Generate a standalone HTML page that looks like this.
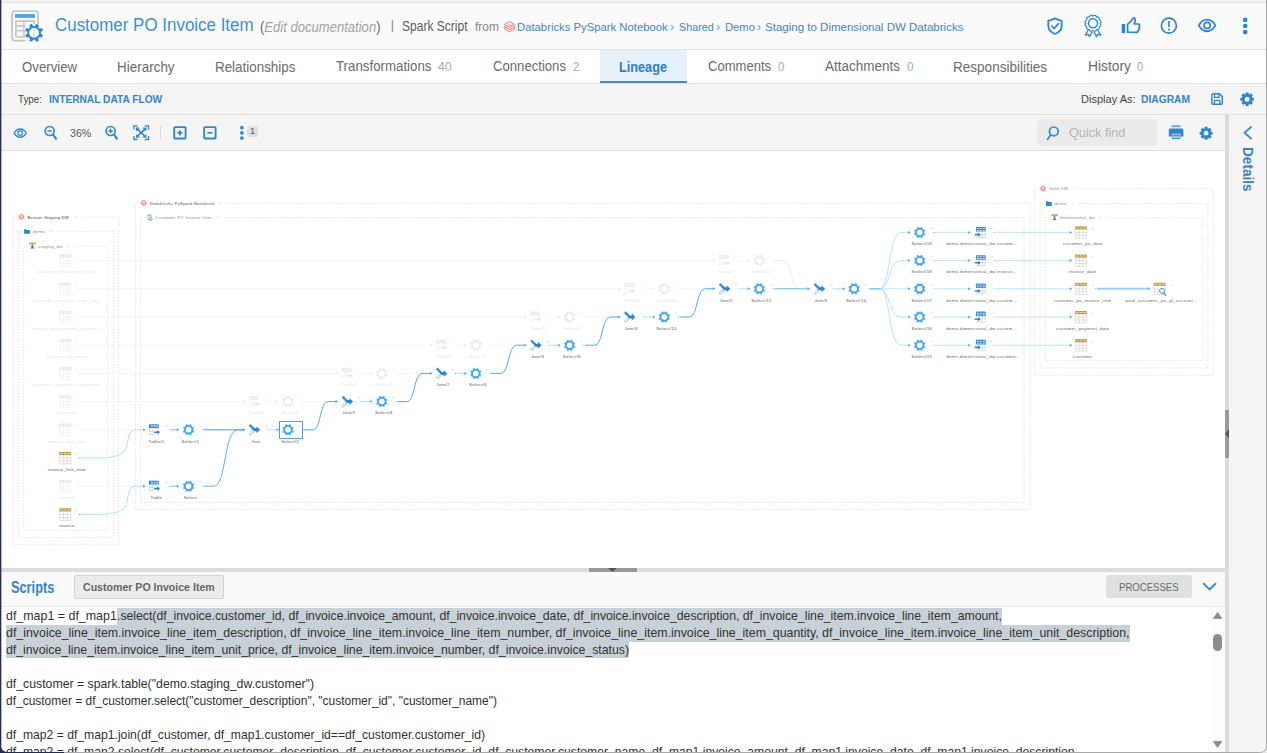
<!DOCTYPE html>
<html lang="en"><head><meta charset="utf-8"><title>Customer PO Invoice Item - Lineage</title>
<style>
html,body{margin:0;padding:0}
body{width:1267px;height:753px;position:relative;overflow:hidden;background:#fff;font-family:"Liberation Sans", sans-serif;}
.b{position:absolute}
.t{position:absolute;white-space:pre;line-height:20px;transform-origin:0 50%}
.t i{font-style:italic}
.sep{font-size:12px;padding:0 1px;color:#5a9bd3}
.sl{position:absolute;left:6px;white-space:pre;line-height:17px;height:17px;font-size:12.6px;color:#313131;transform-origin:0 50%}
.sel{background:#c9d1d8;display:inline-block;height:17px}
svg{position:absolute;left:0;top:0}
</style></head>
<body>

<div class="b" style="left:0;top:0;width:1267px;height:2px;background:#f3f3f3"></div>
<div class="b" style="left:0;top:2px;width:1267px;height:1px;background:#e2e2e2"></div>
<div class="b" style="left:0;top:3px;width:1267px;height:46px;background:#fafafa"></div>
<div class="b" style="left:0;top:49px;width:1267px;height:1px;background:#e3e3e3"></div>
<div class="b" style="left:0;top:50px;width:1267px;height:33px;background:#fff"></div>
<div class="b" style="left:600px;top:50px;width:87px;height:33px;background:#e4f1fb"></div>
<div class="b" style="left:600px;top:80.6px;width:87px;height:2.4px;background:#3d8fd3"></div>
<div class="b" style="left:0;top:83px;width:1267px;height:1px;background:#e0e0e0"></div>
<div class="b" style="left:0;top:84px;width:1267px;height:30px;background:#f5f5f5"></div>
<div class="b" style="left:0;top:114px;width:1267px;height:1px;background:#dedede"></div>
<div class="b" style="left:0;top:115px;width:1225px;height:35px;background:#f5f5f5"></div>
<div class="b" style="left:0;top:150px;width:1225px;height:1px;background:#dedede"></div>
<div class="b" style="left:1037px;top:119px;width:120px;height:27px;background:#ebebeb;border-radius:4px"></div>
<div class="b" style="left:247px;top:125.5px;width:10.6px;height:11px;background:#e0e0e0;border-radius:3px"></div>
<div class="b" style="left:160px;top:126px;width:1px;height:14px;background:#dcdcdc"></div>
<div class="b" style="left:1225px;top:115px;width:4px;height:638px;background:#dcdcdc"></div>
<div class="b" style="left:1225px;top:410px;width:4px;height:47.5px;background:#9a9a9a"></div>
<div class="b" style="left:1229px;top:115px;width:38px;height:638px;background:#f5f5f5"></div>
<div class="b" style="left:0;top:568px;width:1225px;height:4px;background:#dcdcdc"></div>
<div class="b" style="left:589px;top:568px;width:48px;height:4px;background:#9a9a9a"></div>
<div class="b" style="left:0;top:572px;width:1225px;height:34px;background:#fafafa"></div>
<div class="b" style="left:74px;top:575px;width:150px;height:24px;background:#ececec;border:1px solid #d2d2d2;box-sizing:border-box;border-radius:2px"></div>
<div class="b" style="left:1106px;top:575.3px;width:85.6px;height:23px;background:#e0e0e0;border-radius:3px"></div>
<div class="b" style="left:0;top:606px;width:1225px;height:1px;background:#e9e9e9"></div>
<div class="b" style="left:1210px;top:607px;width:15px;height:146px;background:#fcfcfc"></div>
<div class="b" style="left:1213px;top:634px;width:9px;height:17px;background:#8c8c8c;border-radius:4.5px"></div>

<span class="t" style="left:55.2px;top:14.95px;font-size:19.2px;color:#3f8fd0;transform:scaleX(0.8827);">Customer PO Invoice Item</span>
<span class="t" style="left:260.0px;top:16.53px;font-size:15.2px;color:#666;transform:scaleX(0.8598);">(<i style="color:#a2a2a2">Edit documentation</i>)</span>
<span class="t" style="left:390.5px;top:15.10px;font-size:13px;color:#777;transform:scaleX(0.7963);">|</span>
<span class="t" style="left:402.3px;top:16.38px;font-size:13.9px;color:#5e5e5e;transform:scaleX(0.8658);">Spark Script</span>
<span class="t" style="left:475.0px;top:16.50px;font-size:12.4px;color:#888;transform:scaleX(0.9598);">from</span>
<span class="t" style="left:516.5px;top:17.25px;font-size:11.4px;color:#4585c2;transform:scaleX(0.9918);">Databricks PySpark Notebook</span>
<span class="t" style="left:669.5px;top:16.67px;font-size:12.5px;color:#5f9bd2;transform:scaleX(0.9588);">›</span>
<span class="t" style="left:678.7px;top:17.25px;font-size:11.4px;color:#4585c2;transform:scaleX(0.9446);">Shared</span>
<span class="t" style="left:716.4px;top:16.67px;font-size:12.5px;color:#5f9bd2;transform:scaleX(0.9588);">›</span>
<span class="t" style="left:724.6px;top:17.25px;font-size:11.4px;color:#4585c2;transform:scaleX(0.9871);">Demo</span>
<span class="t" style="left:757.4px;top:16.67px;font-size:12.5px;color:#5f9bd2;transform:scaleX(0.9588);">›</span>
<span class="t" style="left:765.4px;top:17.25px;font-size:11.4px;color:#4585c2;transform:scaleX(1.0110);">Staging to Dimensional DW Databricks</span>
<span class="t" style="left:21.5px;top:57.14px;font-size:14.6px;color:#6b6b6b;transform:scaleX(0.9058);">Overview</span>
<span class="t" style="left:116.7px;top:57.14px;font-size:14.6px;color:#6b6b6b;transform:scaleX(0.9223);">Hierarchy</span>
<span class="t" style="left:214.6px;top:57.14px;font-size:14.6px;color:#6b6b6b;transform:scaleX(0.9175);">Relationships</span>
<span class="t" style="left:336.4px;top:55.94px;font-size:14.6px;color:#6b6b6b;transform:scaleX(0.9103);">Transformations</span>
<span class="t" style="left:438.2px;top:57.09px;font-size:13.6px;color:#aaa;transform:scaleX(0.8992);">40</span>
<span class="t" style="left:493.2px;top:55.94px;font-size:14.6px;color:#6b6b6b;transform:scaleX(0.8997);">Connections</span>
<span class="t" style="left:572.5px;top:57.09px;font-size:13.6px;color:#aaa;transform:scaleX(0.8331);">2</span>
<span class="t" style="left:619.0px;top:57.14px;font-size:14.6px;color:#2f7fc1;font-weight:700;transform:scaleX(0.8703);">Lineage</span>
<span class="t" style="left:708.2px;top:55.94px;font-size:14.6px;color:#6b6b6b;transform:scaleX(0.8942);">Comments</span>
<span class="t" style="left:777.6px;top:57.09px;font-size:13.6px;color:#aaa;transform:scaleX(0.8463);">0</span>
<span class="t" style="left:825.1px;top:55.94px;font-size:14.6px;color:#6b6b6b;transform:scaleX(0.9245);">Attachments</span>
<span class="t" style="left:906.7px;top:57.09px;font-size:13.6px;color:#aaa;transform:scaleX(0.8595);">0</span>
<span class="t" style="left:953.4px;top:57.14px;font-size:14.6px;color:#6b6b6b;transform:scaleX(0.9280);">Responsibilities</span>
<span class="t" style="left:1087.6px;top:55.94px;font-size:14.6px;color:#6b6b6b;transform:scaleX(0.9470);">History</span>
<span class="t" style="left:1137.0px;top:57.09px;font-size:13.6px;color:#aaa;transform:scaleX(0.8198);">0</span>
<span class="t" style="left:17.7px;top:88.51px;font-size:11.8px;color:#444;transform:scaleX(0.8282);">Type:</span>
<span class="t" style="left:48.5px;top:88.58px;font-size:11.6px;color:#3585c6;font-weight:700;transform:scaleX(0.8774);">INTERNAL DATA FLOW</span>
<span class="t" style="left:1081.3px;top:88.51px;font-size:11.8px;color:#444;transform:scaleX(0.9356);">Display As:</span>
<span class="t" style="left:1141.0px;top:88.58px;font-size:11.6px;color:#3585c6;font-weight:700;transform:scaleX(0.8846);">DIAGRAM</span>
<span class="t" style="left:70.0px;top:123.01px;font-size:11.8px;color:#555;transform:scaleX(0.8974);">36%</span>
<span class="t" style="left:249.6px;top:120.87px;font-size:9.6px;color:#555;transform:scaleX(0.9357);">1</span>
<span class="t" style="left:1068.6px;top:122.56px;font-size:13.4px;color:#b4b4b4;transform:scaleX(0.9472);">Quick find</span>
<span class="t" style="left:11.2px;top:578.23px;font-size:15.8px;color:#3585c6;font-weight:700;transform:scaleX(0.8084);">Scripts</span>
<span class="t" style="left:83.3px;top:577.11px;font-size:11.8px;color:#666;font-weight:700;transform:scaleX(0.8968);">Customer PO Invoice Item</span>
<span class="t" style="left:1119.4px;top:576.81px;font-size:11.8px;color:#6a6a6a;transform:scaleX(0.8116);">PROCESSES</span>
<span class="t" style="left:1247.7px;top:147.4px;font-size:15.4px;font-weight:700;color:#3585c6;line-height:16px;transform-origin:0 0;transform:rotate(90deg) translate(0,-50%) scaleX(0.885);">Details</span>
<div id="scripts">
<div class="b" style="left:116.8px;top:607.6px;width:884.9px;height:17px;background:#c9d1d8"></div>
<div class="b" style="left:6px;top:624.6px;width:1123.5px;height:17px;background:#c9d1d8"></div>
<div class="b" style="left:6px;top:641.6px;width:623.0px;height:16.8px;background:#c9d1d8"></div>
<div class="sl" style="top:608px;transform:scaleX(0.9860)">df_map1 = df_map1</div>
<div class="sl" style="top:608px;left:116.8px;transform:scaleX(0.9716)">.select(df_invoice.customer_id, df_invoice.invoice_amount, df_invoice.invoice_date, df_invoice.invoice_description, df_invoice_line_item.invoice_line_item_amount,</div>
<div class="sl" style="top:625px;transform:scaleX(0.9824)">df_invoice_line_item.invoice_line_item_description, df_invoice_line_item.invoice_line_item_number, df_invoice_line_item.invoice_line_item_quantity, df_invoice_line_item.invoice_line_item_unit_description,</div>
<div class="sl" style="top:642px;transform:scaleX(0.9737)">df_invoice_line_item.invoice_line_item_unit_price, df_invoice_line_item.invoice_number, df_invoice.invoice_status)</div>
<div class="sl" style="top:676px;transform:scaleX(0.9750)">df_customer = spark.table("demo.staging_dw.customer")</div>
<div class="sl" style="top:693px;transform:scaleX(0.9507)">df_customer = df_customer.select("customer_description", "customer_id", "customer_name")</div>
<div class="sl" style="top:727px;transform:scaleX(0.9658)">df_map2 = df_map1.join(df_customer, df_map1.customer_id==df_customer.customer_id)</div>
<div class="sl" style="top:744px;transform:scaleX(0.9658)">df_map2 = df_map2.select(df_customer.customer_description, df_customer.customer_id, df_customer.customer_name, df_map1.invoice_amount, df_map1.invoice_date, df_map1.invoice_description,</div>
</div>
<svg width="1267" height="753" viewBox="0 0 1267 753" font-family="Liberation Sans, sans-serif">
<g>
<rect x="12.1" y="11.1" width="26" height="29.6" rx="2.6" fill="#fafafa" stroke="#c6c6c6" stroke-width="1.8"/>
<rect x="15" y="14" width="20" height="3.9" fill="#4ea8e6"/>
<path d="M15.9 21.1 H34.2 V37 H15.9 Z M15.9 25.9 H34.2 M15.9 30.8 H34.2 M23.9 21.1 V37" fill="none" stroke="#c6c6c6" stroke-width="1.6"/>
<rect x="25.3" y="23.9" width="17.8" height="17.9" fill="#fafafa"/>
<path d="M33 28 H35 V38 H33 Z" fill="#e6e6e6"/>
<path d="M40.93 33.77 L43.05 34.95 L41.94 37.61 L39.62 36.94 L38.24 38.32 L38.91 40.64 L36.25 41.75 L35.07 39.63 L33.13 39.63 L31.95 41.75 L29.29 40.64 L29.96 38.32 L28.58 36.94 L26.26 37.61 L25.15 34.95 L27.27 33.77 L27.27 31.83 L25.15 30.65 L26.26 27.99 L28.58 28.66 L29.96 27.28 L29.29 24.96 L31.95 23.85 L33.13 25.97 L35.07 25.97 L36.25 23.85 L38.91 24.96 L38.24 27.28 L39.62 28.66 L41.94 27.99 L43.05 30.65 L40.93 31.83 Z M29.20 32.80 a4.90 4.90 0 1 0 9.80 0 a4.90 4.90 0 1 0 -9.80 0 Z" fill="#3488cf" fill-rule="evenodd"/>
</g>
<g fill="none" stroke="#f46a5d" stroke-width="0.95" stroke-linejoin="round" stroke-linecap="round">
<path d="M504.8 24.3 L509.6 21.5 L514.4 24.3 L509.6 27.1 Z" stroke-width="0.9"/>
<path d="M504.8 26.6 L509.6 29.4 L514.4 26.6"/>
<path d="M504.8 28.9 L509.6 31.7 L514.4 28.9"/>
<path d="M504.8 26.6 V28.9 M514.4 26.6 V28.9" stroke-width="0.8"/>
<path d="M507.4 25.9 L509.6 24.7 L511.8 25.9" stroke-width="0.7"/>
</g>
<g fill="none" stroke="#2f86cc" stroke-width="1.8" stroke-linejoin="round" stroke-linecap="round">
<path d="M1055 18.4 C1052.6 19.8 1050.4 20.4 1048.3 20.6 V25.6 C1048.3 29.6 1051 32.6 1055 34 C1059 32.6 1061.7 29.6 1061.7 25.6 V20.6 C1059.6 20.4 1057.4 19.8 1055 18.4 Z"/>
<path d="M1051.8 26 L1054.2 28.4 L1058.6 23.6" stroke-width="1.7"/>
</g>
<g fill="none" stroke="#2f86cc" stroke-linejoin="round">
<path d="M1100.20 23.30 A2.05 2.05 0 0 1 1099.24 26.90 A2.05 2.05 0 0 1 1096.60 29.54 A2.05 2.05 0 0 1 1093.00 30.50 A2.05 2.05 0 0 1 1089.40 29.54 A2.05 2.05 0 0 1 1086.76 26.90 A2.05 2.05 0 0 1 1085.80 23.30 A2.05 2.05 0 0 1 1086.76 19.70 A2.05 2.05 0 0 1 1089.40 17.06 A2.05 2.05 0 0 1 1093.00 16.10 A2.05 2.05 0 0 1 1096.60 17.06 A2.05 2.05 0 0 1 1099.24 19.70 A2.05 2.05 0 0 1 1100.20 23.30 Z" stroke-width="1.15"/>
<circle cx="1093" cy="23.3" r="4.5" stroke-width="1.5"/>
<path d="M1088.2 30.4 L1085.2 35 L1088.3 34.3 L1089.5 36.6 L1092.2 31.8" stroke-width="1.3"/>
<path d="M1097.8 30.4 L1100.8 35 L1097.7 34.3 L1096.5 36.6 L1093.8 31.8" stroke-width="1.3"/>
</g>
<g>
<rect x="1121.7" y="24" width="3.4" height="9.2" fill="#2f86cc"/>
<path d="M1127.6 32.2 V24.4 L1131.6 20.6 C1132.4 19.6 1132.6 18.2 1133.6 17.9 C1135.2 17.9 1135.6 19.8 1135 21.4 L1134.2 24 H1138.2 C1139.6 24 1140 25.4 1139.2 26.4 C1139.8 27.2 1139.5 28.4 1138.7 28.8 C1139.1 29.8 1138.6 30.7 1137.8 31 C1137.9 31.8 1137.3 32.4 1136.2 32.4 Z" fill="none" stroke="#2f86cc" stroke-width="1.7" stroke-linejoin="round"/>
</g>
<g>
<circle cx="1168.9" cy="25.7" r="7.5" fill="none" stroke="#2f86cc" stroke-width="1.7"/>
<rect x="1168.1" y="21" width="1.7" height="6" fill="#2f86cc"/>
<circle cx="1168.95" cy="29.6" r="1.05" fill="#2f86cc"/>
</g>
<g fill="none" stroke="#2f86cc" stroke-width="1.8">
<path d="M1198.8 25.4 C1203 17.6 1211.2 17.6 1215.4 25.4 C1211.2 33.2 1203 33.2 1198.8 25.4 Z" stroke-linejoin="round"/>
<circle cx="1207.1" cy="25.4" r="3.1" stroke-width="1.7"/>
</g>
<g fill="#2f86cc"><circle cx="1245.2" cy="19.9" r="2.35"/><circle cx="1245.2" cy="26" r="2.35"/><circle cx="1245.2" cy="32.1" r="2.35"/></g>
<g fill="none" stroke="#2f86cc" stroke-width="1.5" stroke-linejoin="round">
<path d="M1213.2 93.7 H1219.4 L1222.3 96.6 V103 Q1222.3 104.3 1221 104.3 H1213.2 Q1211.9 104.3 1211.9 103 V95 Q1211.9 93.7 1213.2 93.7 Z"/>
<path d="M1214.6 94 V97.4 H1219 V94" stroke-width="1.3"/>
<path d="M1214.4 104 V100.4 H1219.8 V104" stroke-width="1.3"/>
</g>
<path d="M1252.05 97.59 L1253.83 97.69 L1253.83 100.71 L1252.05 100.81 L1251.73 101.56 L1252.93 102.90 L1250.80 105.03 L1249.46 103.83 L1248.71 104.15 L1248.61 105.93 L1245.59 105.93 L1245.49 104.15 L1244.74 103.83 L1243.40 105.03 L1241.27 102.90 L1242.47 101.56 L1242.15 100.81 L1240.37 100.71 L1240.37 97.69 L1242.15 97.59 L1242.47 96.84 L1241.27 95.50 L1243.40 93.37 L1244.74 94.57 L1245.49 94.25 L1245.59 92.47 L1248.61 92.47 L1248.71 94.25 L1249.46 94.57 L1250.80 93.37 L1252.93 95.50 L1251.73 96.84 Z M1244.60 99.20 a2.50 2.50 0 1 0 5.00 0 a2.50 2.50 0 1 0 -5.00 0 Z" fill="#2f86cc" fill-rule="evenodd"/>
<path d="M1210.86 131.65 L1212.54 131.76 L1212.54 134.64 L1210.86 134.75 L1210.56 135.47 L1211.67 136.74 L1209.64 138.77 L1208.37 137.66 L1207.65 137.96 L1207.54 139.64 L1204.66 139.64 L1204.55 137.96 L1203.83 137.66 L1202.56 138.77 L1200.53 136.74 L1201.64 135.47 L1201.34 134.75 L1199.66 134.64 L1199.66 131.76 L1201.34 131.65 L1201.64 130.93 L1200.53 129.66 L1202.56 127.63 L1203.83 128.74 L1204.55 128.44 L1204.66 126.76 L1207.54 126.76 L1207.65 128.44 L1208.37 128.74 L1209.64 127.63 L1211.67 129.66 L1210.56 130.93 Z M1203.70 133.20 a2.40 2.40 0 1 0 4.80 0 a2.40 2.40 0 1 0 -4.80 0 Z" fill="#2f86cc" fill-rule="evenodd"/>
<g>
<rect x="1171.6" y="125.1" width="9" height="2.3" fill="#7fb4e0"/>
<path d="M1170.4 128.6 H1181.8 Q1183.4 128.6 1183.4 130.2 V136.4 H1180.6 V133.4 H1171.6 V136.4 H1168.8 V130.2 Q1168.8 128.6 1170.4 128.6 Z" fill="#2f86cc"/>
<path d="M1172.3 134 H1179.9 V138.6 H1172.3 Z M1173.4 135.4 H1178.8 M1173.4 137 H1178.8" fill="#fff" stroke="#2f86cc" stroke-width="1"/>
</g>
<g fill="none" stroke="#2f86cc" stroke-width="1.7" stroke-linecap="round">
<circle cx="1053.8" cy="131.4" r="4.4"/>
<path d="M1050.6 135 L1047.6 139.2"/>
</g>
<g fill="none" stroke="#2f86cc" stroke-width="1.4">
<path d="M14.2 133.1 C17.4 127.6 23 127.6 26.2 133.1 C23 138.6 17.4 138.6 14.2 133.1 Z" stroke-linejoin="round"/>
<circle cx="20.2" cy="133.1" r="2.2" stroke-width="1.2"/>
</g>
<g fill="none" stroke="#2f86cc" stroke-width="1.7" stroke-linecap="round"><circle cx="49.7" cy="131" r="4.5"/><path d="M53.1 134.6 L56.1 138.8" stroke-width="2"/><path d="M47.5 131 H51.900000000000006" stroke-width="1.5" stroke-linecap="butt"/></g>
<g fill="none" stroke="#2f86cc" stroke-width="1.7" stroke-linecap="round"><circle cx="110.6" cy="131" r="4.5"/><path d="M114.0 134.6 L117.0 138.8" stroke-width="2"/><path d="M108.39999999999999 131 H112.8" stroke-width="1.5" stroke-linecap="butt"/><path d="M110.6 128.8 V133.2" stroke-width="1.5" stroke-linecap="butt"/></g>
<g fill="none" stroke="#2f86cc" stroke-width="1.3">
<path d="M133.9 129.4 V125.9 H137.6 M144.8 125.9 H148.5 V129.4 M148.5 136 V139.5 H144.8 M137.6 139.5 H133.9 V136"/>
<path d="M137 128.6 L145.4 136.8 M145.4 128.6 L137 136.8" stroke-width="1.6"/>
<path d="M136.6 131 V128.2 H139.4 M143 128.2 H145.8 V131 M145.8 134.4 V137.2 H143 M139.4 137.2 H136.6 V134.4" stroke-width="1.2"/>
</g>
<g fill="none" stroke="#2f86cc"><rect x="174.20000000000002" y="127.1" width="11.4" height="11.4" rx="0.8" stroke-width="1.9"/><path d="M177.3 132.8 H182.5" stroke-width="1.7"/><path d="M179.9 130.2 V135.4" stroke-width="1.7"/></g>
<g fill="none" stroke="#2f86cc"><rect x="204.20000000000002" y="127.1" width="11.4" height="11.4" rx="0.8" stroke-width="1.9"/><path d="M207.3 132.8 H212.5" stroke-width="1.7"/></g>
<g fill="#2f86cc"><circle cx="241.9" cy="127.7" r="1.85"/><circle cx="241.9" cy="132.9" r="1.85"/><circle cx="241.9" cy="138" r="1.85"/></g>
<path d="M1251.6 126.6 L1244.6 132.8 L1251.6 139" fill="none" stroke="#4691d3" stroke-width="2"/>
<path d="M1203.2 583.2 L1209.6 589.4 L1216 583.2" fill="none" stroke="#2f86cc" stroke-width="1.8"/>
<path d="M1213.4 618.4 L1217.6 612.4 L1221.8 618.4 Z" fill="#8c8c8c" stroke="#8c8c8c" stroke-width="0.8" stroke-linejoin="round"/>
<path d="M1213.4 741.4 L1217.6 747.4 L1221.8 741.4 Z" fill="#8c8c8c" stroke="#8c8c8c" stroke-width="0.8" stroke-linejoin="round"/>
<path d="M608 568 L617 568 L612.5 571.9 Z" fill="#555"/>
<path d="M1229 429.2 L1229 438.2 L1225.1 433.7 Z" fill="#555"/>
<g id="diagram">
<path d="M17.6 217.2 H12.7 V544.7 H118.6 V217.2 H81.0" fill="none" stroke="#d6d6d6" stroke-width="0.65" stroke-dasharray="1.4 1.5"/>
<path d="M21.40 214.20 L23.60 215.50 V218.20 L21.40 219.60 L19.20 218.20 V215.50 Z" fill="#fbd3cd" stroke="#f0695d" stroke-width="0.7" stroke-linejoin="round"/><path d="M19.40 216.70 L21.40 217.90 L23.40 216.70" fill="none" stroke="#ef6b60" stroke-width="0.6"/>
<text x="27.5" y="218.9" font-size="4.3" fill="#858585" text-anchor="start" letter-spacing="0.09" font-weight="700">Bronze Staging DW</text>
<path d="M74.3 217.9 L75.5 216.7 L76.7 217.9" fill="none" stroke="#aaa" stroke-width="0.45"/>
<path d="M22.4 231.4 H18.5 V537.4 H113.3 V231.4 H56.2" fill="none" stroke="#d6d6d6" stroke-width="0.65" stroke-dasharray="1.4 1.5"/>
<path d="M24.10 229.20 h2.2 l0.7 0.8 h2.9 v3.8 h-5.8z" fill="#2f86cc"/>
<text x="33.1" y="233.0" font-size="4.3" fill="#888" text-anchor="start" letter-spacing="0.28">demo</text>
<path d="M49.5 232.1 L50.7 230.9 L51.9 232.1" fill="none" stroke="#bbb" stroke-width="0.45"/>
<path d="M27.4 246.2 H23.6 V530.2 H107.6 V246.2 H75.0" fill="none" stroke="#d6d6d6" stroke-width="0.65" stroke-dasharray="1.4 1.5"/>
<rect x="29.20" y="242.60" width="6.4" height="1.9" fill="#c3a94a"/><rect x="29.50" y="244.50" width="5.8" height="4.4" fill="#fff" stroke="#d9d9d9" stroke-width="0.4"/><path d="M31.50 244.60 h1.8 v2.2 l1 1.6 h-3.8 l1 -1.6z" fill="#2f86cc"/>
<text x="38.1" y="247.6" font-size="4.3" fill="#888" text-anchor="start" letter-spacing="0.28">staging_dw</text>
<path d="M67.4 246.8 L68.6 245.6 L69.8 246.8" fill="none" stroke="#bbb" stroke-width="0.45"/>
<path d="M140.4 203.2 H135.4 V509.4 H1030.1 V203.2 H225.0" fill="none" stroke="#d6d6d6" stroke-width="0.65" stroke-dasharray="1.4 1.5"/>
<path d="M143.80 200.30 L146.00 201.60 V204.30 L143.80 205.70 L141.60 204.30 V201.60 Z" fill="#fbd3cd" stroke="#f0695d" stroke-width="0.7" stroke-linejoin="round"/><path d="M141.80 202.80 L143.80 204.00 L145.80 202.80" fill="none" stroke="#ef6b60" stroke-width="0.6"/>
<text x="150.0" y="204.8" font-size="4.2" fill="#8c8c8c" text-anchor="start" letter-spacing="0.18" font-weight="700">Databricks PySpark Notebook</text>
<path d="M219.2 203.9 L220.4 202.7 L221.6 203.9" fill="none" stroke="#aaa" stroke-width="0.45"/>
<path d="M145.6 217.5 H140.6 V502.4 H1024.0 V217.5 H225.0" fill="none" stroke="#d6d6d6" stroke-width="0.65" stroke-dasharray="1.4 1.5"/>
<rect x="147.2" y="214.6" width="4" height="5.2" rx="0.5" fill="#fff" stroke="#9c9c9c" stroke-width="0.5"/><rect x="147.8" y="215.3" width="2.8" height="0.9" fill="#4ea8e6"/><circle cx="150.6" cy="218.8" r="1.5" fill="#fff" stroke="#3488cf" stroke-width="0.8"/>
<text x="155.0" y="219.1" font-size="4.2" fill="#8c8c8c" text-anchor="start" letter-spacing="0.32">Customer PO Invoice Item</text>
<path d="M217.2 218.2 L218.4 217.0 L219.6 218.2" fill="none" stroke="#bbb" stroke-width="0.45"/>
<path d="M1039.0 188.8 H1034.4 V375.3 H1213.3 V188.8 H1080.0" fill="none" stroke="#d6d6d6" stroke-width="0.65" stroke-dasharray="1.4 1.5"/>
<path d="M1043.00 185.90 L1045.20 187.20 V189.90 L1043.00 191.30 L1040.80 189.90 V187.20 Z" fill="#fbd3cd" stroke="#f0695d" stroke-width="0.7" stroke-linejoin="round"/><path d="M1041.00 188.40 L1043.00 189.60 L1045.00 188.40" fill="none" stroke="#ef6b60" stroke-width="0.6"/>
<text x="1049.0" y="190.3" font-size="4.3" fill="#888" text-anchor="start" letter-spacing="0.28">Gold DW</text>
<path d="M1073.1 189.5 L1074.3 188.3 L1075.5 189.5" fill="none" stroke="#bbb" stroke-width="0.45"/>
<path d="M1044.0 203.6 H1040.0 V367.9 H1207.8 V203.6 H1077.8" fill="none" stroke="#d6d6d6" stroke-width="0.65" stroke-dasharray="1.4 1.5"/>
<path d="M1046.00 201.30 h2.2 l0.7 0.8 h2.9 v3.8 h-5.8z" fill="#2f86cc"/>
<text x="1054.6" y="205.1" font-size="4.3" fill="#888" text-anchor="start" letter-spacing="0.28">demo</text>
<path d="M1071.5 204.3 L1072.7 203.1 L1073.9 204.3" fill="none" stroke="#bbb" stroke-width="0.45"/>
<path d="M1049.4 217.9 H1045.5 V360.8 H1202.7 V217.9 H1106.5" fill="none" stroke="#d6d6d6" stroke-width="0.65" stroke-dasharray="1.4 1.5"/>
<rect x="1051.30" y="214.20" width="6.4" height="1.9" fill="#c3a94a"/><rect x="1051.60" y="216.10" width="5.8" height="4.4" fill="#fff" stroke="#d9d9d9" stroke-width="0.4"/><path d="M1053.60 216.20 h1.8 v2.2 l1 1.6 h-3.8 l1 -1.6z" fill="#2f86cc"/>
<text x="1060.0" y="219.3" font-size="4.3" fill="#888" text-anchor="start" letter-spacing="0.28">dimensional_dw</text>
<path d="M1099.4 218.5 L1100.6 217.3 L1101.8 218.5" fill="none" stroke="#bbb" stroke-width="0.45"/>
<g id="edges"><circle cx="79.2" cy="260.60" r="0.5" fill="#e6e6e6"/>
<path d="M80.00 260.60 H713.80" stroke="#f0f0f0" stroke-width="0.7" fill="none"/><path d="M715.80 260.60 l-2.60 -1.50 v3.00z" fill="#e9e9e9"/>
<circle cx="79.2" cy="288.80" r="0.5" fill="#e6e6e6"/>
<path d="M80.00 288.80 H619.00" stroke="#f0f0f0" stroke-width="0.7" fill="none"/><path d="M621.00 288.80 l-2.60 -1.50 v3.00z" fill="#e9e9e9"/>
<circle cx="79.2" cy="317.00" r="0.5" fill="#e6e6e6"/>
<path d="M80.00 317.00 H525.20" stroke="#f0f0f0" stroke-width="0.7" fill="none"/><path d="M527.20 317.00 l-2.60 -1.50 v3.00z" fill="#e9e9e9"/>
<circle cx="79.2" cy="345.20" r="0.5" fill="#e6e6e6"/>
<path d="M80.00 345.20 H430.90" stroke="#f0f0f0" stroke-width="0.7" fill="none"/><path d="M432.90 345.20 l-2.60 -1.50 v3.00z" fill="#e9e9e9"/>
<circle cx="79.2" cy="373.40" r="0.5" fill="#e6e6e6"/>
<path d="M80.00 373.40 H336.60" stroke="#f0f0f0" stroke-width="0.7" fill="none"/><path d="M338.60 373.40 l-2.60 -1.50 v3.00z" fill="#e9e9e9"/>
<circle cx="79.2" cy="401.60" r="0.5" fill="#e6e6e6"/>
<path d="M80.00 401.60 H243.70" stroke="#f0f0f0" stroke-width="0.7" fill="none"/><path d="M245.70 401.60 l-2.60 -1.50 v3.00z" fill="#e9e9e9"/>
<circle cx="79.2" cy="429.80" r="0.5" fill="#e6e6e6"/>
<path d="M80.00 429.80 H132.00" stroke="#f0f0f0" stroke-width="0.7" fill="none"/>
<circle cx="79.2" cy="486.20" r="0.5" fill="#e6e6e6"/>
<path d="M80.00 486.20 H132.00" stroke="#f0f0f0" stroke-width="0.7" fill="none"/>
<path d="M268.60 401.60 H277.00" stroke="#f0f0f0" stroke-width="0.7" fill="none"/><path d="M279.00 401.60 l-2.60 -1.50 v3.00z" fill="#e9e9e9"/>
<path d="M302.00 401.60 H338.20" stroke="#f0f0f0" stroke-width="0.7" fill="none"/>
<path d="M361.50 373.40 H370.80" stroke="#f0f0f0" stroke-width="0.7" fill="none"/><path d="M372.80 373.40 l-2.60 -1.50 v3.00z" fill="#e9e9e9"/>
<path d="M395.80 373.40 H432.50" stroke="#f0f0f0" stroke-width="0.7" fill="none"/>
<path d="M455.80 345.20 H464.80" stroke="#f0f0f0" stroke-width="0.7" fill="none"/><path d="M466.80 345.20 l-2.60 -1.50 v3.00z" fill="#e9e9e9"/>
<path d="M489.80 345.20 H526.80" stroke="#f0f0f0" stroke-width="0.7" fill="none"/>
<path d="M550.10 317.00 H558.60" stroke="#f0f0f0" stroke-width="0.7" fill="none"/><path d="M560.60 317.00 l-2.60 -1.50 v3.00z" fill="#e9e9e9"/>
<path d="M583.60 317.00 H620.60" stroke="#f0f0f0" stroke-width="0.7" fill="none"/>
<path d="M643.90 288.80 H653.30" stroke="#f0f0f0" stroke-width="0.7" fill="none"/><path d="M655.30 288.80 l-2.60 -1.50 v3.00z" fill="#e9e9e9"/>
<path d="M678.30 288.80 H715.40" stroke="#f0f0f0" stroke-width="0.7" fill="none"/>
<path d="M738.70 260.60 H748.30" stroke="#f0f0f0" stroke-width="0.7" fill="none"/><path d="M750.30 260.60 l-2.60 -1.50 v3.00z" fill="#e9e9e9"/>
<path d="M773.4 260.60 H782.5 C792 260.60 790.5 288.80 799 288.80" stroke="#e4e4e4" stroke-width="0.7" fill="none"/>
<circle cx="169.40" cy="429.80" r="0.55" fill="#56aaea"/><path d="M170.70 429.80 H177.40" stroke="#7fc0f2" stroke-width="1.0" fill="none"/><path d="M179.40 429.80 l-2.60 -1.50 v3.00z" fill="#56aaea"/>
<circle cx="169.40" cy="486.20" r="0.55" fill="#56aaea"/><path d="M170.70 486.20 H177.40" stroke="#7fc0f2" stroke-width="1.0" fill="none"/><path d="M179.40 486.20 l-2.60 -1.50 v3.00z" fill="#56aaea"/>
<circle cx="79.6" cy="458.00" r="0.6" fill="#56aaea"/><path d="M80.6 458.00 H98 C116 458.00 125.6 454.40 127.2 445.00 C128.6 434.80 130 429.80 136 429.80 H143.8" stroke="#a3d3f7" stroke-width="0.8" fill="none"/><path d="M145.80 429.80 l-2.60 -1.50 v3.00z" fill="#56aaea"/>
<circle cx="79.6" cy="514.40" r="0.6" fill="#56aaea"/><path d="M80.6 514.40 H98 C116 514.40 125.6 510.80 127.2 501.40 C128.6 491.20 130 486.20 136 486.20 H143.8" stroke="#a3d3f7" stroke-width="0.8" fill="none"/><path d="M145.80 486.20 l-2.60 -1.50 v3.00z" fill="#56aaea"/>
<circle cx="202.80" cy="429.80" r="0.55" fill="#56aaea"/><path d="M204.10 429.80 H243.40" stroke="#7cbef1" stroke-width="1.5" fill="none"/><path d="M245.40 429.80 l-2.60 -1.50 v3.00z" fill="#56aaea"/>
<circle cx="202.80" cy="486.20" r="0.55" fill="#56aaea"/><path d="M204.10 486.20 H213.40 C226.93 486.20 223.24 429.80 238.00 429.80 H243.40" stroke="#4fa8ea" stroke-width="0.9" fill="none"/><path d="M245.40 429.80 l-2.60 -1.50 v3.00z" fill="#56aaea"/>
<circle cx="268.10" cy="429.80" r="0.55" fill="#56aaea"/><path d="M269.40 429.80 H277.20" stroke="#b5dbf8" stroke-width="1.0" fill="none"/><path d="M279.20 429.80 l-2.60 -1.50 v3.00z" fill="#56aaea"/>
<circle cx="302.20" cy="429.80" r="0.55" fill="#56aaea"/><path d="M303.50 429.80 H312.80 C321.49 429.80 319.12 401.60 328.60 401.60 H336.20" stroke="#4fa8ea" stroke-width="1.0" fill="none"/><path d="M338.20 401.60 l-2.60 -1.50 v3.00z" fill="#56aaea"/>
<circle cx="361.00" cy="401.60" r="0.55" fill="#56aaea"/><path d="M362.30 401.60 H371.00" stroke="#b5dbf8" stroke-width="1.0" fill="none"/><path d="M373.00 401.60 l-2.60 -1.50 v3.00z" fill="#56aaea"/>
<circle cx="396.00" cy="401.60" r="0.55" fill="#56aaea"/><path d="M397.30 401.60 H406.60 C415.56 401.60 413.12 373.40 422.90 373.40 H430.50" stroke="#4fa8ea" stroke-width="1.0" fill="none"/><path d="M432.50 373.40 l-2.60 -1.50 v3.00z" fill="#56aaea"/>
<circle cx="455.30" cy="373.40" r="0.55" fill="#56aaea"/><path d="M456.60 373.40 H465.00" stroke="#b5dbf8" stroke-width="1.0" fill="none"/><path d="M467.00 373.40 l-2.60 -1.50 v3.00z" fill="#56aaea"/>
<circle cx="490.00" cy="373.40" r="0.55" fill="#56aaea"/><path d="M491.30 373.40 H500.60 C509.73 373.40 507.24 345.20 517.20 345.20 H524.80" stroke="#4fa8ea" stroke-width="1.0" fill="none"/><path d="M526.80 345.20 l-2.60 -1.50 v3.00z" fill="#56aaea"/>
<circle cx="549.60" cy="345.20" r="0.55" fill="#56aaea"/><path d="M550.90 345.20 H558.80" stroke="#b5dbf8" stroke-width="1.0" fill="none"/><path d="M560.80 345.20 l-2.60 -1.50 v3.00z" fill="#56aaea"/>
<circle cx="583.80" cy="345.20" r="0.55" fill="#56aaea"/><path d="M585.10 345.20 H594.40 C603.53 345.20 601.04 317.00 611.00 317.00 H618.60" stroke="#4fa8ea" stroke-width="1.0" fill="none"/><path d="M620.60 317.00 l-2.60 -1.50 v3.00z" fill="#56aaea"/>
<circle cx="643.40" cy="317.00" r="0.55" fill="#56aaea"/><path d="M644.70 317.00 H653.50" stroke="#b5dbf8" stroke-width="1.0" fill="none"/><path d="M655.50 317.00 l-2.60 -1.50 v3.00z" fill="#56aaea"/>
<circle cx="678.50" cy="317.00" r="0.55" fill="#56aaea"/><path d="M679.80 317.00 H689.10 C698.28 317.00 695.78 288.80 705.80 288.80 H713.40" stroke="#4fa8ea" stroke-width="1.0" fill="none"/><path d="M715.40 288.80 l-2.60 -1.50 v3.00z" fill="#56aaea"/>
<circle cx="738.20" cy="288.80" r="0.55" fill="#56aaea"/><path d="M739.50 288.80 H748.50" stroke="#b5dbf8" stroke-width="1.0" fill="none"/><path d="M750.50 288.80 l-2.60 -1.50 v3.00z" fill="#56aaea"/>
<circle cx="833.10" cy="288.80" r="0.55" fill="#56aaea"/><path d="M834.40 288.80 H843.30" stroke="#b5dbf8" stroke-width="1.0" fill="none"/><path d="M845.30 288.80 l-2.60 -1.50 v3.00z" fill="#56aaea"/>
<circle cx="773.50" cy="288.80" r="0.55" fill="#56aaea"/><path d="M774.80 288.80 H808.10" stroke="#9ccdf3" stroke-width="1.6" fill="none"/><path d="M810.10 288.80 l-2.60 -1.50 v3.00z" fill="#56aaea"/>
<path d="M879.5 288.80 C891 288.80 887.5 232.40 901.5 232.40 H908.7" stroke="#a9d6f7" stroke-width="0.75" fill="none"/><path d="M910.70 232.40 l-2.60 -1.50 v3.00z" fill="#56aaea"/>
<circle cx="934.20" cy="232.40" r="0.55" fill="#56aaea"/><path d="M935.50 232.40 H968.80" stroke="#a9d6f7" stroke-width="0.7" fill="none"/><path d="M970.80 232.40 l-2.60 -1.50 v3.00z" fill="#56aaea"/>
<circle cx="994.20" cy="232.40" r="0.55" fill="#56aaea"/><path d="M995.50 232.40 H1070.30" stroke="#a9d6f7" stroke-width="0.7" fill="none"/><path d="M1072.30 232.40 l-2.60 -1.50 v3.00z" fill="#56aaea"/>
<path d="M879.5 288.80 C891 288.80 887.5 260.60 901.5 260.60 H908.7" stroke="#a9d6f7" stroke-width="0.75" fill="none"/><path d="M910.70 260.60 l-2.60 -1.50 v3.00z" fill="#56aaea"/>
<circle cx="934.20" cy="260.60" r="0.55" fill="#56aaea"/><path d="M935.50 260.60 H968.80" stroke="#a9d6f7" stroke-width="0.7" fill="none"/><path d="M970.80 260.60 l-2.60 -1.50 v3.00z" fill="#56aaea"/>
<circle cx="994.20" cy="260.60" r="0.55" fill="#56aaea"/><path d="M995.50 260.60 H1070.30" stroke="#a9d6f7" stroke-width="0.7" fill="none"/><path d="M1072.30 260.60 l-2.60 -1.50 v3.00z" fill="#56aaea"/>
<circle cx="868.50" cy="288.80" r="0.55" fill="#56aaea"/><path d="M869.70 288.80 H880.5" stroke="#8cc6f2" stroke-width="1.6" fill="none"/>
<path d="M880 288.80 H908.7" stroke="#a9d6f7" stroke-width="0.75" fill="none"/><path d="M910.70 288.80 l-2.60 -1.50 v3.00z" fill="#56aaea"/>
<circle cx="934.20" cy="288.80" r="0.55" fill="#56aaea"/><path d="M935.50 288.80 H968.80" stroke="#a9d6f7" stroke-width="0.7" fill="none"/><path d="M970.80 288.80 l-2.60 -1.50 v3.00z" fill="#56aaea"/>
<circle cx="994.20" cy="288.80" r="0.55" fill="#56aaea"/><path d="M995.50 288.80 H1070.30" stroke="#a9d6f7" stroke-width="0.7" fill="none"/><path d="M1072.30 288.80 l-2.60 -1.50 v3.00z" fill="#56aaea"/>
<path d="M879.5 288.80 C891 288.80 887.5 317.00 901.5 317.00 H908.7" stroke="#a9d6f7" stroke-width="0.75" fill="none"/><path d="M910.70 317.00 l-2.60 -1.50 v3.00z" fill="#56aaea"/>
<circle cx="934.20" cy="317.00" r="0.55" fill="#56aaea"/><path d="M935.50 317.00 H968.80" stroke="#a9d6f7" stroke-width="0.7" fill="none"/><path d="M970.80 317.00 l-2.60 -1.50 v3.00z" fill="#56aaea"/>
<circle cx="994.20" cy="317.00" r="0.55" fill="#56aaea"/><path d="M995.50 317.00 H1070.30" stroke="#a9d6f7" stroke-width="0.7" fill="none"/><path d="M1072.30 317.00 l-2.60 -1.50 v3.00z" fill="#56aaea"/>
<path d="M879.5 288.80 C891 288.80 887.5 345.20 901.5 345.20 H908.7" stroke="#a9d6f7" stroke-width="0.75" fill="none"/><path d="M910.70 345.20 l-2.60 -1.50 v3.00z" fill="#56aaea"/>
<circle cx="934.20" cy="345.20" r="0.55" fill="#56aaea"/><path d="M935.50 345.20 H968.80" stroke="#a9d6f7" stroke-width="0.7" fill="none"/><path d="M970.80 345.20 l-2.60 -1.50 v3.00z" fill="#56aaea"/>
<circle cx="994.20" cy="345.20" r="0.55" fill="#56aaea"/><path d="M995.50 345.20 H1070.30" stroke="#a9d6f7" stroke-width="0.7" fill="none"/><path d="M1072.30 345.20 l-2.60 -1.50 v3.00z" fill="#56aaea"/>
<circle cx="1095.40" cy="288.80" r="0.55" fill="#56aaea"/><path d="M1096.70 288.80 H1148.40" stroke="#a3d1f6" stroke-width="1.9" fill="none"/><path d="M1150.40 288.80 l-2.60 -1.50 v3.00z" fill="#56aaea"/></g>
<g id="nodes"><rect x="59.30" y="254.50" width="11.8" height="3.2" fill="#f1f1f1"/><path d="M59.60 254.80 H70.80 V257.70 M59.60 254.80 V257.70 M63.40 254.80 V257.70 M67.10 254.80 V257.70" fill="none" stroke="#e2e2e2" stroke-width="0.5"/><path d="M59.60 257.70 V266.50 H70.80 V257.70 M63.40 257.70 V266.50 M67.10 257.70 V266.50 M59.60 260.70 H70.80 M59.60 263.60 H70.80" fill="none" stroke="#ededed" stroke-width="0.6"/>
<path d="M75.5 256.2 L76.7 257.4 L77.9 256.2" fill="none" stroke="#d8d8d8" stroke-width="0.45"/>
<text x="66.9" y="273.3" font-size="4.3" fill="#e3e3e3" text-anchor="middle" letter-spacing="0.28">customer_purchase_order</text>
<rect x="59.30" y="282.70" width="11.8" height="3.2" fill="#f1f1f1"/><path d="M59.60 283.00 H70.80 V285.90 M59.60 283.00 V285.90 M63.40 283.00 V285.90 M67.10 283.00 V285.90" fill="none" stroke="#e2e2e2" stroke-width="0.5"/><path d="M59.60 285.90 V294.70 H70.80 V285.90 M63.40 285.90 V294.70 M67.10 285.90 V294.70 M59.60 288.90 H70.80 M59.60 291.80 H70.80" fill="none" stroke="#ededed" stroke-width="0.6"/>
<path d="M75.5 284.4 L76.7 285.6 L77.9 284.4" fill="none" stroke="#d8d8d8" stroke-width="0.45"/>
<text x="66.9" y="301.5" font-size="4.3" fill="#e3e3e3" text-anchor="middle" letter-spacing="0.28">customer_purchase_order_lin…</text>
<rect x="59.30" y="310.90" width="11.8" height="3.2" fill="#f1f1f1"/><path d="M59.60 311.20 H70.80 V314.10 M59.60 311.20 V314.10 M63.40 311.20 V314.10 M67.10 311.20 V314.10" fill="none" stroke="#e2e2e2" stroke-width="0.5"/><path d="M59.60 314.10 V322.90 H70.80 V314.10 M63.40 314.10 V322.90 M67.10 314.10 V322.90 M59.60 317.10 H70.80 M59.60 320.00 H70.80" fill="none" stroke="#ededed" stroke-width="0.6"/>
<path d="M75.5 312.6 L76.7 313.8 L77.9 312.6" fill="none" stroke="#d8d8d8" stroke-width="0.45"/>
<text x="66.9" y="329.7" font-size="4.3" fill="#e3e3e3" text-anchor="middle" letter-spacing="0.28">invoice_associatedto_purchas…</text>
<rect x="59.30" y="339.10" width="11.8" height="3.2" fill="#f1f1f1"/><path d="M59.60 339.40 H70.80 V342.30 M59.60 339.40 V342.30 M63.40 339.40 V342.30 M67.10 339.40 V342.30" fill="none" stroke="#e2e2e2" stroke-width="0.5"/><path d="M59.60 342.30 V351.10 H70.80 V342.30 M63.40 342.30 V351.10 M67.10 342.30 V351.10 M59.60 345.30 H70.80 M59.60 348.20 H70.80" fill="none" stroke="#ededed" stroke-width="0.6"/>
<path d="M75.5 340.8 L76.7 342.0 L77.9 340.8" fill="none" stroke="#d8d8d8" stroke-width="0.45"/>
<text x="66.9" y="357.9" font-size="4.3" fill="#e3e3e3" text-anchor="middle" letter-spacing="0.28">customer_payment</text>
<rect x="59.30" y="367.30" width="11.8" height="3.2" fill="#f1f1f1"/><path d="M59.60 367.60 H70.80 V370.50 M59.60 367.60 V370.50 M63.40 367.60 V370.50 M67.10 367.60 V370.50" fill="none" stroke="#e2e2e2" stroke-width="0.5"/><path d="M59.60 370.50 V379.30 H70.80 V370.50 M63.40 370.50 V379.30 M67.10 370.50 V379.30 M59.60 373.50 H70.80 M59.60 376.40 H70.80" fill="none" stroke="#ededed" stroke-width="0.6"/>
<path d="M75.5 369.0 L76.7 370.2 L77.9 369.0" fill="none" stroke="#d8d8d8" stroke-width="0.45"/>
<text x="66.9" y="386.1" font-size="4.3" fill="#e3e3e3" text-anchor="middle" letter-spacing="0.28">customer_payment_assignment</text>
<rect x="59.30" y="395.50" width="11.8" height="3.2" fill="#f1f1f1"/><path d="M59.60 395.80 H70.80 V398.70 M59.60 395.80 V398.70 M63.40 395.80 V398.70 M67.10 395.80 V398.70" fill="none" stroke="#e2e2e2" stroke-width="0.5"/><path d="M59.60 398.70 V407.50 H70.80 V398.70 M63.40 398.70 V407.50 M67.10 398.70 V407.50 M59.60 401.70 H70.80 M59.60 404.60 H70.80" fill="none" stroke="#ededed" stroke-width="0.6"/>
<path d="M75.5 397.2 L76.7 398.4 L77.9 397.2" fill="none" stroke="#d8d8d8" stroke-width="0.45"/>
<text x="66.9" y="414.3" font-size="4.3" fill="#e3e3e3" text-anchor="middle" letter-spacing="0.28">customer</text>
<rect x="59.30" y="423.70" width="11.8" height="3.2" fill="#f1f1f1"/><path d="M59.60 424.00 H70.80 V426.90 M59.60 424.00 V426.90 M63.40 424.00 V426.90 M67.10 424.00 V426.90" fill="none" stroke="#e2e2e2" stroke-width="0.5"/><path d="M59.60 426.90 V435.70 H70.80 V426.90 M63.40 426.90 V435.70 M67.10 426.90 V435.70 M59.60 429.90 H70.80 M59.60 432.80 H70.80" fill="none" stroke="#ededed" stroke-width="0.6"/>
<path d="M75.5 425.4 L76.7 426.6 L77.9 425.4" fill="none" stroke="#d8d8d8" stroke-width="0.45"/>
<text x="66.9" y="442.5" font-size="4.3" fill="#e3e3e3" text-anchor="middle" letter-spacing="0.28">invoice_line_item</text>
<rect x="59.30" y="451.90" width="11.8" height="3.2" fill="#b9a24a"/><path d="M60.30 453.00 h2.6 v0.9 h-2.6z M63.90 453.00 h2.6 v0.9 h-2.6z M67.50 453.00 h2.6 v0.9 h-2.6z" fill="#e8dfb4"/><path d="M59.60 455.10 V463.90 H70.80 V455.10 M63.40 455.10 V463.90 M67.10 455.10 V463.90 M59.60 458.10 H70.80 M59.60 461.00 H70.80" fill="none" stroke="#cdcdcd" stroke-width="0.6"/>
<path d="M75.5 453.6 L76.7 454.8 L77.9 453.6" fill="none" stroke="#b0b0b0" stroke-width="0.45"/>
<text x="66.9" y="470.7" font-size="4.3" fill="#555" text-anchor="middle" letter-spacing="0.28">invoice_line_item</text>
<rect x="59.30" y="480.10" width="11.8" height="3.2" fill="#f1f1f1"/><path d="M59.60 480.40 H70.80 V483.30 M59.60 480.40 V483.30 M63.40 480.40 V483.30 M67.10 480.40 V483.30" fill="none" stroke="#e2e2e2" stroke-width="0.5"/><path d="M59.60 483.30 V492.10 H70.80 V483.30 M63.40 483.30 V492.10 M67.10 483.30 V492.10 M59.60 486.30 H70.80 M59.60 489.20 H70.80" fill="none" stroke="#ededed" stroke-width="0.6"/>
<path d="M75.5 481.8 L76.7 483.0 L77.9 481.8" fill="none" stroke="#d8d8d8" stroke-width="0.45"/>
<text x="66.9" y="498.9" font-size="4.3" fill="#e3e3e3" text-anchor="middle" letter-spacing="0.28">invoice</text>
<rect x="59.30" y="508.30" width="11.8" height="3.2" fill="#b9a24a"/><path d="M60.30 509.40 h2.6 v0.9 h-2.6z M63.90 509.40 h2.6 v0.9 h-2.6z M67.50 509.40 h2.6 v0.9 h-2.6z" fill="#e8dfb4"/><path d="M59.60 511.50 V520.30 H70.80 V511.50 M63.40 511.50 V520.30 M67.10 511.50 V520.30 M59.60 514.50 H70.80 M59.60 517.40 H70.80" fill="none" stroke="#cdcdcd" stroke-width="0.6"/>
<path d="M75.5 510.0 L76.7 511.2 L77.9 510.0" fill="none" stroke="#b0b0b0" stroke-width="0.45"/>
<text x="66.9" y="527.1" font-size="4.3" fill="#555" text-anchor="middle" letter-spacing="0.28">invoice</text>
<rect x="248.90" y="396.10" width="9.7" height="3.8" fill="#ececec"/><path d="M251.10 397.10 h1.6 v1.7 h-1.6z M253.80 397.10 h1.6 v1.7 h-1.6z M256.30 397.10 h1.4 v1.7 h-1.4z" fill="#fff" opacity="0.5"/><path d="M249.20 399.90 V406.10 H258.30 V399.90 M252.10 399.90 V406.10 M255.10 399.90 V406.10 M249.20 403.00 H258.30" fill="none" stroke="#efefef" stroke-width="0.6"/><rect x="253.50" y="401.70" width="6.4" height="4.4" fill="#fff"/><path d="M253.90 403.20 h3.2 v-1.3 l2.9 2.1 l-2.9 2.1 v-1.3 h-3.2z" fill="#e6e6e6"/>
<path d="M265.0 397.2 L266.2 398.4 L267.4 397.2" fill="none" stroke="#e6e6e6" stroke-width="0.45"/>
<text x="256.3" y="414.3" font-size="4.3" fill="#e4e4e4" text-anchor="middle" letter-spacing="0.28">Table/2</text>
<path d="M292.46 402.16 L293.76 402.89 L292.98 404.76 L291.56 404.36 L290.76 405.16 L291.16 406.58 L289.29 407.36 L288.56 406.06 L287.44 406.06 L286.71 407.36 L284.84 406.58 L285.24 405.16 L284.44 404.36 L283.02 404.76 L282.24 402.89 L283.54 402.16 L283.54 401.04 L282.24 400.31 L283.02 398.44 L284.44 398.84 L285.24 398.04 L284.84 396.62 L286.71 395.84 L287.44 397.14 L288.56 397.14 L289.29 395.84 L291.16 396.62 L290.76 398.04 L291.56 398.84 L292.98 398.44 L293.76 400.31 L292.46 401.04 Z M285.00 401.60 a3.00 3.00 0 1 0 6.00 0 a3.00 3.00 0 1 0 -6.00 0 Z" fill="#ebebeb" fill-rule="evenodd"/>
<path d="M298.8 397.2 L300.0 398.4 L301.2 397.2" fill="none" stroke="#e6e6e6" stroke-width="0.45"/>
<text x="290.1" y="414.3" font-size="4.3" fill="#e4e4e4" text-anchor="middle" letter-spacing="0.28">Select/3</text>
<rect x="341.80" y="367.90" width="9.7" height="3.8" fill="#ececec"/><path d="M344.00 368.90 h1.6 v1.7 h-1.6z M346.70 368.90 h1.6 v1.7 h-1.6z M349.20 368.90 h1.4 v1.7 h-1.4z" fill="#fff" opacity="0.5"/><path d="M342.10 371.70 V377.90 H351.20 V371.70 M345.00 371.70 V377.90 M348.00 371.70 V377.90 M342.10 374.80 H351.20" fill="none" stroke="#efefef" stroke-width="0.6"/><rect x="346.40" y="373.50" width="6.4" height="4.4" fill="#fff"/><path d="M346.80 375.00 h3.2 v-1.3 l2.9 2.1 l-2.9 2.1 v-1.3 h-3.2z" fill="#e6e6e6"/>
<path d="M357.9 369.0 L359.1 370.2 L360.3 369.0" fill="none" stroke="#e6e6e6" stroke-width="0.45"/>
<text x="349.2" y="386.1" font-size="4.3" fill="#e4e4e4" text-anchor="middle" letter-spacing="0.28">Table/3</text>
<path d="M386.26 373.96 L387.56 374.69 L386.78 376.56 L385.36 376.16 L384.56 376.96 L384.96 378.38 L383.09 379.16 L382.36 377.86 L381.24 377.86 L380.51 379.16 L378.64 378.38 L379.04 376.96 L378.24 376.16 L376.82 376.56 L376.04 374.69 L377.34 373.96 L377.34 372.84 L376.04 372.11 L376.82 370.24 L378.24 370.64 L379.04 369.84 L378.64 368.42 L380.51 367.64 L381.24 368.94 L382.36 368.94 L383.09 367.64 L384.96 368.42 L384.56 369.84 L385.36 370.64 L386.78 370.24 L387.56 372.11 L386.26 372.84 Z M378.80 373.40 a3.00 3.00 0 1 0 6.00 0 a3.00 3.00 0 1 0 -6.00 0 Z" fill="#ebebeb" fill-rule="evenodd"/>
<path d="M392.6 369.0 L393.8 370.2 L395.0 369.0" fill="none" stroke="#e6e6e6" stroke-width="0.45"/>
<text x="383.9" y="386.1" font-size="4.3" fill="#e4e4e4" text-anchor="middle" letter-spacing="0.28">Select/5</text>
<rect x="436.10" y="339.70" width="9.7" height="3.8" fill="#ececec"/><path d="M438.30 340.70 h1.6 v1.7 h-1.6z M441.00 340.70 h1.6 v1.7 h-1.6z M443.50 340.70 h1.4 v1.7 h-1.4z" fill="#fff" opacity="0.5"/><path d="M436.40 343.50 V349.70 H445.50 V343.50 M439.30 343.50 V349.70 M442.30 343.50 V349.70 M436.40 346.60 H445.50" fill="none" stroke="#efefef" stroke-width="0.6"/><rect x="440.70" y="345.30" width="6.4" height="4.4" fill="#fff"/><path d="M441.10 346.80 h3.2 v-1.3 l2.9 2.1 l-2.9 2.1 v-1.3 h-3.2z" fill="#e6e6e6"/>
<path d="M452.2 340.8 L453.4 342.0 L454.6 340.8" fill="none" stroke="#e6e6e6" stroke-width="0.45"/>
<text x="443.5" y="357.9" font-size="4.3" fill="#e4e4e4" text-anchor="middle" letter-spacing="0.28">Table/4</text>
<path d="M480.26 345.76 L481.56 346.49 L480.78 348.36 L479.36 347.96 L478.56 348.76 L478.96 350.18 L477.09 350.96 L476.36 349.66 L475.24 349.66 L474.51 350.96 L472.64 350.18 L473.04 348.76 L472.24 347.96 L470.82 348.36 L470.04 346.49 L471.34 345.76 L471.34 344.64 L470.04 343.91 L470.82 342.04 L472.24 342.44 L473.04 341.64 L472.64 340.22 L474.51 339.44 L475.24 340.74 L476.36 340.74 L477.09 339.44 L478.96 340.22 L478.56 341.64 L479.36 342.44 L480.78 342.04 L481.56 343.91 L480.26 344.64 Z M472.80 345.20 a3.00 3.00 0 1 0 6.00 0 a3.00 3.00 0 1 0 -6.00 0 Z" fill="#ebebeb" fill-rule="evenodd"/>
<path d="M486.6 340.8 L487.8 342.0 L489.0 340.8" fill="none" stroke="#e6e6e6" stroke-width="0.45"/>
<text x="477.9" y="357.9" font-size="4.3" fill="#e4e4e4" text-anchor="middle" letter-spacing="0.28">Select/7</text>
<rect x="530.40" y="311.50" width="9.7" height="3.8" fill="#ececec"/><path d="M532.60 312.50 h1.6 v1.7 h-1.6z M535.30 312.50 h1.6 v1.7 h-1.6z M537.80 312.50 h1.4 v1.7 h-1.4z" fill="#fff" opacity="0.5"/><path d="M530.70 315.30 V321.50 H539.80 V315.30 M533.60 315.30 V321.50 M536.60 315.30 V321.50 M530.70 318.40 H539.80" fill="none" stroke="#efefef" stroke-width="0.6"/><rect x="535.00" y="317.10" width="6.4" height="4.4" fill="#fff"/><path d="M535.40 318.60 h3.2 v-1.3 l2.9 2.1 l-2.9 2.1 v-1.3 h-3.2z" fill="#e6e6e6"/>
<path d="M546.5 312.6 L547.7 313.8 L548.9 312.6" fill="none" stroke="#e6e6e6" stroke-width="0.45"/>
<text x="537.8" y="329.7" font-size="4.3" fill="#e4e4e4" text-anchor="middle" letter-spacing="0.28">Table/5</text>
<path d="M574.06 317.56 L575.36 318.29 L574.58 320.16 L573.16 319.76 L572.36 320.56 L572.76 321.98 L570.89 322.76 L570.16 321.46 L569.04 321.46 L568.31 322.76 L566.44 321.98 L566.84 320.56 L566.04 319.76 L564.62 320.16 L563.84 318.29 L565.14 317.56 L565.14 316.44 L563.84 315.71 L564.62 313.84 L566.04 314.24 L566.84 313.44 L566.44 312.02 L568.31 311.24 L569.04 312.54 L570.16 312.54 L570.89 311.24 L572.76 312.02 L572.36 313.44 L573.16 314.24 L574.58 313.84 L575.36 315.71 L574.06 316.44 Z M566.60 317.00 a3.00 3.00 0 1 0 6.00 0 a3.00 3.00 0 1 0 -6.00 0 Z" fill="#ebebeb" fill-rule="evenodd"/>
<path d="M580.4 312.6 L581.6 313.8 L582.8 312.6" fill="none" stroke="#e6e6e6" stroke-width="0.45"/>
<text x="571.7" y="329.7" font-size="4.3" fill="#e4e4e4" text-anchor="middle" letter-spacing="0.28">Select/9</text>
<rect x="624.20" y="283.30" width="9.7" height="3.8" fill="#ececec"/><path d="M626.40 284.30 h1.6 v1.7 h-1.6z M629.10 284.30 h1.6 v1.7 h-1.6z M631.60 284.30 h1.4 v1.7 h-1.4z" fill="#fff" opacity="0.5"/><path d="M624.50 287.10 V293.30 H633.60 V287.10 M627.40 287.10 V293.30 M630.40 287.10 V293.30 M624.50 290.20 H633.60" fill="none" stroke="#efefef" stroke-width="0.6"/><rect x="628.80" y="288.90" width="6.4" height="4.4" fill="#fff"/><path d="M629.20 290.40 h3.2 v-1.3 l2.9 2.1 l-2.9 2.1 v-1.3 h-3.2z" fill="#e6e6e6"/>
<path d="M640.3 284.4 L641.5 285.6 L642.7 284.4" fill="none" stroke="#e6e6e6" stroke-width="0.45"/>
<text x="631.6" y="301.5" font-size="4.3" fill="#e4e4e4" text-anchor="middle" letter-spacing="0.28">Table/6</text>
<path d="M668.76 289.36 L670.06 290.09 L669.28 291.96 L667.86 291.56 L667.06 292.36 L667.46 293.78 L665.59 294.56 L664.86 293.26 L663.74 293.26 L663.01 294.56 L661.14 293.78 L661.54 292.36 L660.74 291.56 L659.32 291.96 L658.54 290.09 L659.84 289.36 L659.84 288.24 L658.54 287.51 L659.32 285.64 L660.74 286.04 L661.54 285.24 L661.14 283.82 L663.01 283.04 L663.74 284.34 L664.86 284.34 L665.59 283.04 L667.46 283.82 L667.06 285.24 L667.86 286.04 L669.28 285.64 L670.06 287.51 L668.76 288.24 Z M661.30 288.80 a3.00 3.00 0 1 0 6.00 0 a3.00 3.00 0 1 0 -6.00 0 Z" fill="#ebebeb" fill-rule="evenodd"/>
<path d="M675.1 284.4 L676.3 285.6 L677.5 284.4" fill="none" stroke="#e6e6e6" stroke-width="0.45"/>
<text x="666.4" y="301.5" font-size="4.3" fill="#e4e4e4" text-anchor="middle" letter-spacing="0.28">Select/11</text>
<rect x="719.00" y="255.10" width="9.7" height="3.8" fill="#ececec"/><path d="M721.20 256.10 h1.6 v1.7 h-1.6z M723.90 256.10 h1.6 v1.7 h-1.6z M726.40 256.10 h1.4 v1.7 h-1.4z" fill="#fff" opacity="0.5"/><path d="M719.30 258.90 V265.10 H728.40 V258.90 M722.20 258.90 V265.10 M725.20 258.90 V265.10 M719.30 262.00 H728.40" fill="none" stroke="#efefef" stroke-width="0.6"/><rect x="723.60" y="260.70" width="6.4" height="4.4" fill="#fff"/><path d="M724.00 262.20 h3.2 v-1.3 l2.9 2.1 l-2.9 2.1 v-1.3 h-3.2z" fill="#e6e6e6"/>
<path d="M735.1 256.2 L736.3 257.4 L737.5 256.2" fill="none" stroke="#e6e6e6" stroke-width="0.45"/>
<text x="726.4" y="273.3" font-size="4.3" fill="#e4e4e4" text-anchor="middle" letter-spacing="0.28">Table/7</text>
<path d="M763.76 261.16 L765.06 261.89 L764.28 263.76 L762.86 263.36 L762.06 264.16 L762.46 265.58 L760.59 266.36 L759.86 265.06 L758.74 265.06 L758.01 266.36 L756.14 265.58 L756.54 264.16 L755.74 263.36 L754.32 263.76 L753.54 261.89 L754.84 261.16 L754.84 260.04 L753.54 259.31 L754.32 257.44 L755.74 257.84 L756.54 257.04 L756.14 255.62 L758.01 254.84 L758.74 256.14 L759.86 256.14 L760.59 254.84 L762.46 255.62 L762.06 257.04 L762.86 257.84 L764.28 257.44 L765.06 259.31 L763.76 260.04 Z M756.30 260.60 a3.00 3.00 0 1 0 6.00 0 a3.00 3.00 0 1 0 -6.00 0 Z" fill="#ebebeb" fill-rule="evenodd"/>
<path d="M770.1 256.2 L771.3 257.4 L772.5 256.2" fill="none" stroke="#e6e6e6" stroke-width="0.45"/>
<text x="761.4" y="273.3" font-size="4.3" fill="#e4e4e4" text-anchor="middle" letter-spacing="0.28">Select/13</text>
<rect x="149.00" y="424.30" width="9.7" height="3.8" fill="#3488cf"/><path d="M151.20 425.30 h1.6 v1.7 h-1.6z M153.90 425.30 h1.6 v1.7 h-1.6z M156.40 425.30 h1.4 v1.7 h-1.4z" fill="#fff" opacity="0.75"/><path d="M149.30 428.10 V434.30 H158.40 V428.10 M152.20 428.10 V434.30 M155.20 428.10 V434.30 M149.30 431.20 H158.40" fill="none" stroke="#bfbfbf" stroke-width="0.6"/><rect x="153.60" y="429.90" width="6.4" height="4.4" fill="#fff"/><path d="M154.00 431.40 h3.2 v-1.3 l2.9 2.1 l-2.9 2.1 v-1.3 h-3.2z" fill="#2f86cc"/>
<path d="M165.1 425.3 L166.3 426.5 L167.5 425.3" fill="none" stroke="#b0b0b0" stroke-width="0.45"/>
<text x="156.4" y="442.5" font-size="4.3" fill="#555" text-anchor="middle" letter-spacing="0.28">Table/1</text>
<path d="M193.06 430.36 L194.36 431.09 L193.58 432.96 L192.16 432.56 L191.36 433.36 L191.76 434.78 L189.89 435.56 L189.16 434.26 L188.04 434.26 L187.31 435.56 L185.44 434.78 L185.84 433.36 L185.04 432.56 L183.62 432.96 L182.84 431.09 L184.14 430.36 L184.14 429.24 L182.84 428.51 L183.62 426.64 L185.04 427.04 L185.84 426.24 L185.44 424.82 L187.31 424.04 L188.04 425.34 L189.16 425.34 L189.89 424.04 L191.76 424.82 L191.36 426.24 L192.16 427.04 L193.58 426.64 L194.36 428.51 L193.06 429.24 Z M185.60 429.80 a3.00 3.00 0 1 0 6.00 0 a3.00 3.00 0 1 0 -6.00 0 Z" fill="#66b8f1" fill-rule="evenodd"/><circle cx="188.60" cy="429.80" r="3.75" fill="none" stroke="#42a2e9" stroke-width="1.5"/>
<path d="M199.2 425.3 L200.4 426.5 L201.6 425.3" fill="none" stroke="#b0b0b0" stroke-width="0.45"/>
<text x="190.5" y="442.5" font-size="4.3" fill="#555" text-anchor="middle" letter-spacing="0.28">Select/1</text>
<rect x="149.00" y="480.70" width="9.7" height="3.8" fill="#3488cf"/><path d="M151.20 481.70 h1.6 v1.7 h-1.6z M153.90 481.70 h1.6 v1.7 h-1.6z M156.40 481.70 h1.4 v1.7 h-1.4z" fill="#fff" opacity="0.75"/><path d="M149.30 484.50 V490.70 H158.40 V484.50 M152.20 484.50 V490.70 M155.20 484.50 V490.70 M149.30 487.60 H158.40" fill="none" stroke="#bfbfbf" stroke-width="0.6"/><rect x="153.60" y="486.30" width="6.4" height="4.4" fill="#fff"/><path d="M154.00 487.80 h3.2 v-1.3 l2.9 2.1 l-2.9 2.1 v-1.3 h-3.2z" fill="#2f86cc"/>
<path d="M165.1 481.7 L166.3 482.9 L167.5 481.7" fill="none" stroke="#b0b0b0" stroke-width="0.45"/>
<text x="156.4" y="498.9" font-size="4.3" fill="#555" text-anchor="middle" letter-spacing="0.28">Table</text>
<path d="M193.06 486.76 L194.36 487.49 L193.58 489.36 L192.16 488.96 L191.36 489.76 L191.76 491.18 L189.89 491.96 L189.16 490.66 L188.04 490.66 L187.31 491.96 L185.44 491.18 L185.84 489.76 L185.04 488.96 L183.62 489.36 L182.84 487.49 L184.14 486.76 L184.14 485.64 L182.84 484.91 L183.62 483.04 L185.04 483.44 L185.84 482.64 L185.44 481.22 L187.31 480.44 L188.04 481.74 L189.16 481.74 L189.89 480.44 L191.76 481.22 L191.36 482.64 L192.16 483.44 L193.58 483.04 L194.36 484.91 L193.06 485.64 Z M185.60 486.20 a3.00 3.00 0 1 0 6.00 0 a3.00 3.00 0 1 0 -6.00 0 Z" fill="#66b8f1" fill-rule="evenodd"/><circle cx="188.60" cy="486.20" r="3.75" fill="none" stroke="#42a2e9" stroke-width="1.5"/>
<path d="M199.2 481.7 L200.4 482.9 L201.6 481.7" fill="none" stroke="#b0b0b0" stroke-width="0.45"/>
<text x="190.5" y="498.9" font-size="4.3" fill="#555" text-anchor="middle" letter-spacing="0.28">Select</text>
<path d="M248.70 425.70 L250.40 424.00 L254.70 428.30 H256.50 V426.40 L260.20 429.80 L256.50 433.20 V431.30 H253.90 L252.70 429.80 Z" fill="#2f86cc"/><path d="M249.70 425.90 l1.1 -1.1 M250.90 427.10 l1.1 -1.1 M252.10 428.30 l1.1 -1.1" stroke="#fff" stroke-width="0.45" opacity="0.7"/><path d="M248.70 433.90 L250.40 435.60 L254.10 431.90 L252.40 430.20 Z" fill="#e3f0fa" stroke="#7fb6e2" stroke-width="0.45"/><path d="M249.70 433.70 l1.2 1.2 M250.90 432.50 l1.2 1.2 M252.10 431.30 l1.2 1.2" stroke="#7fb6e2" stroke-width="0.4"/>
<path d="M265.1 425.3 L266.3 426.5 L267.5 425.3" fill="none" stroke="#b0b0b0" stroke-width="0.45"/>
<text x="256.0" y="442.5" font-size="4.3" fill="#555" text-anchor="middle" letter-spacing="0.28">Join</text>
<path d="M292.46 430.36 L293.76 431.09 L292.98 432.96 L291.56 432.56 L290.76 433.36 L291.16 434.78 L289.29 435.56 L288.56 434.26 L287.44 434.26 L286.71 435.56 L284.84 434.78 L285.24 433.36 L284.44 432.56 L283.02 432.96 L282.24 431.09 L283.54 430.36 L283.54 429.24 L282.24 428.51 L283.02 426.64 L284.44 427.04 L285.24 426.24 L284.84 424.82 L286.71 424.04 L287.44 425.34 L288.56 425.34 L289.29 424.04 L291.16 424.82 L290.76 426.24 L291.56 427.04 L292.98 426.64 L293.76 428.51 L292.46 429.24 Z M285.00 429.80 a3.00 3.00 0 1 0 6.00 0 a3.00 3.00 0 1 0 -6.00 0 Z" fill="#66b8f1" fill-rule="evenodd"/><circle cx="288.00" cy="429.80" r="3.75" fill="none" stroke="#42a2e9" stroke-width="1.5"/>
<path d="M298.7 425.3 L299.9 426.5 L301.1 425.3" fill="none" stroke="#b0b0b0" stroke-width="0.45"/>
<text x="290.1" y="442.5" font-size="4.3" fill="#555" text-anchor="middle" letter-spacing="0.28">Select/2</text>
<path d="M341.60 397.50 L343.30 395.80 L347.60 400.10 H349.40 V398.20 L353.10 401.60 L349.40 405.00 V403.10 H346.80 L345.60 401.60 Z" fill="#2f86cc"/><path d="M342.60 397.70 l1.1 -1.1 M343.80 398.90 l1.1 -1.1 M345.00 400.10 l1.1 -1.1" stroke="#fff" stroke-width="0.45" opacity="0.7"/><path d="M341.60 405.70 L343.30 407.40 L347.00 403.70 L345.30 402.00 Z" fill="#e3f0fa" stroke="#7fb6e2" stroke-width="0.45"/><path d="M342.60 405.50 l1.2 1.2 M343.80 404.30 l1.2 1.2 M345.00 403.10 l1.2 1.2" stroke="#7fb6e2" stroke-width="0.4"/>
<path d="M358.0 397.1 L359.2 398.3 L360.4 397.1" fill="none" stroke="#b0b0b0" stroke-width="0.45"/>
<text x="348.9" y="414.3" font-size="4.3" fill="#555" text-anchor="middle" letter-spacing="0.28">Join/1</text>
<path d="M386.26 402.16 L387.56 402.89 L386.78 404.76 L385.36 404.36 L384.56 405.16 L384.96 406.58 L383.09 407.36 L382.36 406.06 L381.24 406.06 L380.51 407.36 L378.64 406.58 L379.04 405.16 L378.24 404.36 L376.82 404.76 L376.04 402.89 L377.34 402.16 L377.34 401.04 L376.04 400.31 L376.82 398.44 L378.24 398.84 L379.04 398.04 L378.64 396.62 L380.51 395.84 L381.24 397.14 L382.36 397.14 L383.09 395.84 L384.96 396.62 L384.56 398.04 L385.36 398.84 L386.78 398.44 L387.56 400.31 L386.26 401.04 Z M378.80 401.60 a3.00 3.00 0 1 0 6.00 0 a3.00 3.00 0 1 0 -6.00 0 Z" fill="#66b8f1" fill-rule="evenodd"/><circle cx="381.80" cy="401.60" r="3.75" fill="none" stroke="#42a2e9" stroke-width="1.5"/>
<path d="M392.5 397.1 L393.7 398.3 L394.9 397.1" fill="none" stroke="#b0b0b0" stroke-width="0.45"/>
<text x="383.9" y="414.3" font-size="4.3" fill="#555" text-anchor="middle" letter-spacing="0.28">Select/4</text>
<path d="M435.90 369.30 L437.60 367.60 L441.90 371.90 H443.70 V370.00 L447.40 373.40 L443.70 376.80 V374.90 H441.10 L439.90 373.40 Z" fill="#2f86cc"/><path d="M436.90 369.50 l1.1 -1.1 M438.10 370.70 l1.1 -1.1 M439.30 371.90 l1.1 -1.1" stroke="#fff" stroke-width="0.45" opacity="0.7"/><path d="M435.90 377.50 L437.60 379.20 L441.30 375.50 L439.60 373.80 Z" fill="#e3f0fa" stroke="#7fb6e2" stroke-width="0.45"/><path d="M436.90 377.30 l1.2 1.2 M438.10 376.10 l1.2 1.2 M439.30 374.90 l1.2 1.2" stroke="#7fb6e2" stroke-width="0.4"/>
<path d="M452.3 368.9 L453.5 370.1 L454.7 368.9" fill="none" stroke="#b0b0b0" stroke-width="0.45"/>
<text x="443.2" y="386.1" font-size="4.3" fill="#555" text-anchor="middle" letter-spacing="0.28">Join/2</text>
<path d="M480.26 373.96 L481.56 374.69 L480.78 376.56 L479.36 376.16 L478.56 376.96 L478.96 378.38 L477.09 379.16 L476.36 377.86 L475.24 377.86 L474.51 379.16 L472.64 378.38 L473.04 376.96 L472.24 376.16 L470.82 376.56 L470.04 374.69 L471.34 373.96 L471.34 372.84 L470.04 372.11 L470.82 370.24 L472.24 370.64 L473.04 369.84 L472.64 368.42 L474.51 367.64 L475.24 368.94 L476.36 368.94 L477.09 367.64 L478.96 368.42 L478.56 369.84 L479.36 370.64 L480.78 370.24 L481.56 372.11 L480.26 372.84 Z M472.80 373.40 a3.00 3.00 0 1 0 6.00 0 a3.00 3.00 0 1 0 -6.00 0 Z" fill="#66b8f1" fill-rule="evenodd"/><circle cx="475.80" cy="373.40" r="3.75" fill="none" stroke="#42a2e9" stroke-width="1.5"/>
<path d="M486.5 368.9 L487.7 370.1 L488.9 368.9" fill="none" stroke="#b0b0b0" stroke-width="0.45"/>
<text x="477.9" y="386.1" font-size="4.3" fill="#555" text-anchor="middle" letter-spacing="0.28">Select/6</text>
<path d="M530.20 341.10 L531.90 339.40 L536.20 343.70 H538.00 V341.80 L541.70 345.20 L538.00 348.60 V346.70 H535.40 L534.20 345.20 Z" fill="#2f86cc"/><path d="M531.20 341.30 l1.1 -1.1 M532.40 342.50 l1.1 -1.1 M533.60 343.70 l1.1 -1.1" stroke="#fff" stroke-width="0.45" opacity="0.7"/><path d="M530.20 349.30 L531.90 351.00 L535.60 347.30 L533.90 345.60 Z" fill="#e3f0fa" stroke="#7fb6e2" stroke-width="0.45"/><path d="M531.20 349.10 l1.2 1.2 M532.40 347.90 l1.2 1.2 M533.60 346.70 l1.2 1.2" stroke="#7fb6e2" stroke-width="0.4"/>
<path d="M546.6 340.7 L547.8 341.9 L549.0 340.7" fill="none" stroke="#b0b0b0" stroke-width="0.45"/>
<text x="537.5" y="357.9" font-size="4.3" fill="#555" text-anchor="middle" letter-spacing="0.28">Join/3</text>
<path d="M574.06 345.76 L575.36 346.49 L574.58 348.36 L573.16 347.96 L572.36 348.76 L572.76 350.18 L570.89 350.96 L570.16 349.66 L569.04 349.66 L568.31 350.96 L566.44 350.18 L566.84 348.76 L566.04 347.96 L564.62 348.36 L563.84 346.49 L565.14 345.76 L565.14 344.64 L563.84 343.91 L564.62 342.04 L566.04 342.44 L566.84 341.64 L566.44 340.22 L568.31 339.44 L569.04 340.74 L570.16 340.74 L570.89 339.44 L572.76 340.22 L572.36 341.64 L573.16 342.44 L574.58 342.04 L575.36 343.91 L574.06 344.64 Z M566.60 345.20 a3.00 3.00 0 1 0 6.00 0 a3.00 3.00 0 1 0 -6.00 0 Z" fill="#66b8f1" fill-rule="evenodd"/><circle cx="569.60" cy="345.20" r="3.75" fill="none" stroke="#42a2e9" stroke-width="1.5"/>
<path d="M580.3 340.7 L581.5 341.9 L582.7 340.7" fill="none" stroke="#b0b0b0" stroke-width="0.45"/>
<text x="571.7" y="357.9" font-size="4.3" fill="#555" text-anchor="middle" letter-spacing="0.28">Select/8</text>
<path d="M624.00 312.90 L625.70 311.20 L630.00 315.50 H631.80 V313.60 L635.50 317.00 L631.80 320.40 V318.50 H629.20 L628.00 317.00 Z" fill="#2f86cc"/><path d="M625.00 313.10 l1.1 -1.1 M626.20 314.30 l1.1 -1.1 M627.40 315.50 l1.1 -1.1" stroke="#fff" stroke-width="0.45" opacity="0.7"/><path d="M624.00 321.10 L625.70 322.80 L629.40 319.10 L627.70 317.40 Z" fill="#e3f0fa" stroke="#7fb6e2" stroke-width="0.45"/><path d="M625.00 320.90 l1.2 1.2 M626.20 319.70 l1.2 1.2 M627.40 318.50 l1.2 1.2" stroke="#7fb6e2" stroke-width="0.4"/>
<path d="M640.4 312.5 L641.6 313.7 L642.8 312.5" fill="none" stroke="#b0b0b0" stroke-width="0.45"/>
<text x="631.3" y="329.7" font-size="4.3" fill="#555" text-anchor="middle" letter-spacing="0.28">Join/4</text>
<path d="M668.76 317.56 L670.06 318.29 L669.28 320.16 L667.86 319.76 L667.06 320.56 L667.46 321.98 L665.59 322.76 L664.86 321.46 L663.74 321.46 L663.01 322.76 L661.14 321.98 L661.54 320.56 L660.74 319.76 L659.32 320.16 L658.54 318.29 L659.84 317.56 L659.84 316.44 L658.54 315.71 L659.32 313.84 L660.74 314.24 L661.54 313.44 L661.14 312.02 L663.01 311.24 L663.74 312.54 L664.86 312.54 L665.59 311.24 L667.46 312.02 L667.06 313.44 L667.86 314.24 L669.28 313.84 L670.06 315.71 L668.76 316.44 Z M661.30 317.00 a3.00 3.00 0 1 0 6.00 0 a3.00 3.00 0 1 0 -6.00 0 Z" fill="#66b8f1" fill-rule="evenodd"/><circle cx="664.30" cy="317.00" r="3.75" fill="none" stroke="#42a2e9" stroke-width="1.5"/>
<path d="M675.0 312.5 L676.2 313.7 L677.4 312.5" fill="none" stroke="#b0b0b0" stroke-width="0.45"/>
<text x="666.4" y="329.7" font-size="4.3" fill="#555" text-anchor="middle" letter-spacing="0.28">Select/10</text>
<path d="M718.80 284.70 L720.50 283.00 L724.80 287.30 H726.60 V285.40 L730.30 288.80 L726.60 292.20 V290.30 H724.00 L722.80 288.80 Z" fill="#2f86cc"/><path d="M719.80 284.90 l1.1 -1.1 M721.00 286.10 l1.1 -1.1 M722.20 287.30 l1.1 -1.1" stroke="#fff" stroke-width="0.45" opacity="0.7"/><path d="M718.80 292.90 L720.50 294.60 L724.20 290.90 L722.50 289.20 Z" fill="#e3f0fa" stroke="#7fb6e2" stroke-width="0.45"/><path d="M719.80 292.70 l1.2 1.2 M721.00 291.50 l1.2 1.2 M722.20 290.30 l1.2 1.2" stroke="#7fb6e2" stroke-width="0.4"/>
<path d="M735.2 284.3 L736.4 285.5 L737.6 284.3" fill="none" stroke="#b0b0b0" stroke-width="0.45"/>
<text x="726.1" y="301.5" font-size="4.3" fill="#555" text-anchor="middle" letter-spacing="0.28">Join/5</text>
<path d="M763.76 289.36 L765.06 290.09 L764.28 291.96 L762.86 291.56 L762.06 292.36 L762.46 293.78 L760.59 294.56 L759.86 293.26 L758.74 293.26 L758.01 294.56 L756.14 293.78 L756.54 292.36 L755.74 291.56 L754.32 291.96 L753.54 290.09 L754.84 289.36 L754.84 288.24 L753.54 287.51 L754.32 285.64 L755.74 286.04 L756.54 285.24 L756.14 283.82 L758.01 283.04 L758.74 284.34 L759.86 284.34 L760.59 283.04 L762.46 283.82 L762.06 285.24 L762.86 286.04 L764.28 285.64 L765.06 287.51 L763.76 288.24 Z M756.30 288.80 a3.00 3.00 0 1 0 6.00 0 a3.00 3.00 0 1 0 -6.00 0 Z" fill="#66b8f1" fill-rule="evenodd"/><circle cx="759.30" cy="288.80" r="3.75" fill="none" stroke="#42a2e9" stroke-width="1.5"/>
<path d="M770.0 284.3 L771.2 285.5 L772.4 284.3" fill="none" stroke="#b0b0b0" stroke-width="0.45"/>
<text x="761.4" y="301.5" font-size="4.3" fill="#555" text-anchor="middle" letter-spacing="0.28">Select/12</text>
<path d="M813.70 284.70 L815.40 283.00 L819.70 287.30 H821.50 V285.40 L825.20 288.80 L821.50 292.20 V290.30 H818.90 L817.70 288.80 Z" fill="#2f86cc"/><path d="M814.70 284.90 l1.1 -1.1 M815.90 286.10 l1.1 -1.1 M817.10 287.30 l1.1 -1.1" stroke="#fff" stroke-width="0.45" opacity="0.7"/><path d="M813.70 292.90 L815.40 294.60 L819.10 290.90 L817.40 289.20 Z" fill="#e3f0fa" stroke="#7fb6e2" stroke-width="0.45"/><path d="M814.70 292.70 l1.2 1.2 M815.90 291.50 l1.2 1.2 M817.10 290.30 l1.2 1.2" stroke="#7fb6e2" stroke-width="0.4"/>
<path d="M830.1 284.3 L831.3 285.5 L832.5 284.3" fill="none" stroke="#b0b0b0" stroke-width="0.45"/>
<text x="821.0" y="301.5" font-size="4.3" fill="#555" text-anchor="middle" letter-spacing="0.28">Join/6</text>
<path d="M858.56 289.36 L859.86 290.09 L859.08 291.96 L857.66 291.56 L856.86 292.36 L857.26 293.78 L855.39 294.56 L854.66 293.26 L853.54 293.26 L852.81 294.56 L850.94 293.78 L851.34 292.36 L850.54 291.56 L849.12 291.96 L848.34 290.09 L849.64 289.36 L849.64 288.24 L848.34 287.51 L849.12 285.64 L850.54 286.04 L851.34 285.24 L850.94 283.82 L852.81 283.04 L853.54 284.34 L854.66 284.34 L855.39 283.04 L857.26 283.82 L856.86 285.24 L857.66 286.04 L859.08 285.64 L859.86 287.51 L858.56 288.24 Z M851.10 288.80 a3.00 3.00 0 1 0 6.00 0 a3.00 3.00 0 1 0 -6.00 0 Z" fill="#66b8f1" fill-rule="evenodd"/><circle cx="854.10" cy="288.80" r="3.75" fill="none" stroke="#42a2e9" stroke-width="1.5"/>
<path d="M864.8 284.3 L866.0 285.5 L867.2 284.3" fill="none" stroke="#b0b0b0" stroke-width="0.45"/>
<text x="856.2" y="301.5" font-size="4.3" fill="#555" text-anchor="middle" letter-spacing="0.28">Select/14</text>
<rect x="279.5" y="421.5" width="23" height="16.9" fill="none" stroke="#4691d1" stroke-width="0.9"/>
<path d="M924.16 232.96 L925.46 233.69 L924.68 235.56 L923.26 235.16 L922.46 235.96 L922.86 237.38 L920.99 238.16 L920.26 236.86 L919.14 236.86 L918.41 238.16 L916.54 237.38 L916.94 235.96 L916.14 235.16 L914.72 235.56 L913.94 233.69 L915.24 232.96 L915.24 231.84 L913.94 231.11 L914.72 229.24 L916.14 229.64 L916.94 228.84 L916.54 227.42 L918.41 226.64 L919.14 227.94 L920.26 227.94 L920.99 226.64 L922.86 227.42 L922.46 228.84 L923.26 229.64 L924.68 229.24 L925.46 231.11 L924.16 231.84 Z M916.70 232.40 a3.00 3.00 0 1 0 6.00 0 a3.00 3.00 0 1 0 -6.00 0 Z" fill="#66b8f1" fill-rule="evenodd"/><circle cx="919.70" cy="232.40" r="3.75" fill="none" stroke="#42a2e9" stroke-width="1.5"/>
<path d="M930.4 227.9 L931.6 229.1 L932.8 227.9" fill="none" stroke="#b0b0b0" stroke-width="0.45"/>
<text x="921.8" y="245.1" font-size="4.3" fill="#555" text-anchor="middle" letter-spacing="0.28">Select/19</text>
<path d="M975.90 227.90 Q975.90 227.00 976.80 227.00 H984.80 Q985.70 227.00 985.70 227.90 V231.60 H975.90 Z" fill="#3488cf"/><path d="M976.90 228.10 h1.9 v1 h-1.9z M979.80 228.10 h1.9 v1 h-1.9z M982.80 228.10 h1.9 v1 h-1.9z M976.90 229.90 h1.9 v1 h-1.9z M979.80 229.90 h1.9 v1 h-1.9z M982.80 229.90 h1.9 v1 h-1.9z" fill="#fff" opacity="0.8"/><path d="M976.20 231.60 V237.40 H985.40 V231.60 M979.30 231.60 V237.40 M982.30 231.60 V237.40 M976.20 234.50 H985.40" fill="none" stroke="#c8c8c8" stroke-width="0.6"/><rect x="974.50" y="232.40" width="6.6" height="4.2" fill="#fff"/><path d="M974.80 233.80 h3.2 v-1.3 l2.9 2.1 l-2.9 2.1 v-1.3 h-3.2z" fill="#2f86cc"/>
<path d="M990.4 227.9 L991.6 229.1 L992.8 227.9" fill="none" stroke="#b0b0b0" stroke-width="0.45"/>
<text x="981.8" y="245.1" font-size="4.3" fill="#666" text-anchor="middle" letter-spacing="0.34">demo.dimensional_dw.custom…</text>
<rect x="1075.10" y="226.30" width="11.8" height="3.2" fill="#b9a24a"/><path d="M1076.10 227.40 h2.6 v0.9 h-2.6z M1079.70 227.40 h2.6 v0.9 h-2.6z M1083.30 227.40 h2.6 v0.9 h-2.6z" fill="#e8dfb4"/><path d="M1075.40 229.50 V238.30 H1086.60 V229.50 M1079.20 229.50 V238.30 M1082.90 229.50 V238.30 M1075.40 232.50 H1086.60 M1075.40 235.40 H1086.60" fill="none" stroke="#cdcdcd" stroke-width="0.6"/>
<path d="M1091.4 228.2 L1092.6 229.4 L1093.8 228.2" fill="none" stroke="#b0b0b0" stroke-width="0.45"/>
<text x="1082.7" y="245.1" font-size="4.3" fill="#666" text-anchor="middle" letter-spacing="0.28">customer_po_date</text>
<path d="M924.16 261.16 L925.46 261.89 L924.68 263.76 L923.26 263.36 L922.46 264.16 L922.86 265.58 L920.99 266.36 L920.26 265.06 L919.14 265.06 L918.41 266.36 L916.54 265.58 L916.94 264.16 L916.14 263.36 L914.72 263.76 L913.94 261.89 L915.24 261.16 L915.24 260.04 L913.94 259.31 L914.72 257.44 L916.14 257.84 L916.94 257.04 L916.54 255.62 L918.41 254.84 L919.14 256.14 L920.26 256.14 L920.99 254.84 L922.86 255.62 L922.46 257.04 L923.26 257.84 L924.68 257.44 L925.46 259.31 L924.16 260.04 Z M916.70 260.60 a3.00 3.00 0 1 0 6.00 0 a3.00 3.00 0 1 0 -6.00 0 Z" fill="#66b8f1" fill-rule="evenodd"/><circle cx="919.70" cy="260.60" r="3.75" fill="none" stroke="#42a2e9" stroke-width="1.5"/>
<path d="M930.4 256.1 L931.6 257.3 L932.8 256.1" fill="none" stroke="#b0b0b0" stroke-width="0.45"/>
<text x="921.8" y="273.3" font-size="4.3" fill="#555" text-anchor="middle" letter-spacing="0.28">Select/18</text>
<path d="M975.90 256.10 Q975.90 255.20 976.80 255.20 H984.80 Q985.70 255.20 985.70 256.10 V259.80 H975.90 Z" fill="#3488cf"/><path d="M976.90 256.30 h1.9 v1 h-1.9z M979.80 256.30 h1.9 v1 h-1.9z M982.80 256.30 h1.9 v1 h-1.9z M976.90 258.10 h1.9 v1 h-1.9z M979.80 258.10 h1.9 v1 h-1.9z M982.80 258.10 h1.9 v1 h-1.9z" fill="#fff" opacity="0.8"/><path d="M976.20 259.80 V265.60 H985.40 V259.80 M979.30 259.80 V265.60 M982.30 259.80 V265.60 M976.20 262.70 H985.40" fill="none" stroke="#c8c8c8" stroke-width="0.6"/><rect x="974.50" y="260.60" width="6.6" height="4.2" fill="#fff"/><path d="M974.80 262.00 h3.2 v-1.3 l2.9 2.1 l-2.9 2.1 v-1.3 h-3.2z" fill="#2f86cc"/>
<path d="M990.4 256.1 L991.6 257.3 L992.8 256.1" fill="none" stroke="#b0b0b0" stroke-width="0.45"/>
<text x="981.8" y="273.3" font-size="4.3" fill="#666" text-anchor="middle" letter-spacing="0.34">demo.dimensional_dw.invoice…</text>
<rect x="1075.10" y="254.50" width="11.8" height="3.2" fill="#b9a24a"/><path d="M1076.10 255.60 h2.6 v0.9 h-2.6z M1079.70 255.60 h2.6 v0.9 h-2.6z M1083.30 255.60 h2.6 v0.9 h-2.6z" fill="#e8dfb4"/><path d="M1075.40 257.70 V266.50 H1086.60 V257.70 M1079.20 257.70 V266.50 M1082.90 257.70 V266.50 M1075.40 260.70 H1086.60 M1075.40 263.60 H1086.60" fill="none" stroke="#cdcdcd" stroke-width="0.6"/>
<path d="M1091.4 256.4 L1092.6 257.6 L1093.8 256.4" fill="none" stroke="#b0b0b0" stroke-width="0.45"/>
<text x="1082.7" y="273.3" font-size="4.3" fill="#666" text-anchor="middle" letter-spacing="0.28">invoice_date</text>
<path d="M924.16 289.36 L925.46 290.09 L924.68 291.96 L923.26 291.56 L922.46 292.36 L922.86 293.78 L920.99 294.56 L920.26 293.26 L919.14 293.26 L918.41 294.56 L916.54 293.78 L916.94 292.36 L916.14 291.56 L914.72 291.96 L913.94 290.09 L915.24 289.36 L915.24 288.24 L913.94 287.51 L914.72 285.64 L916.14 286.04 L916.94 285.24 L916.54 283.82 L918.41 283.04 L919.14 284.34 L920.26 284.34 L920.99 283.04 L922.86 283.82 L922.46 285.24 L923.26 286.04 L924.68 285.64 L925.46 287.51 L924.16 288.24 Z M916.70 288.80 a3.00 3.00 0 1 0 6.00 0 a3.00 3.00 0 1 0 -6.00 0 Z" fill="#66b8f1" fill-rule="evenodd"/><circle cx="919.70" cy="288.80" r="3.75" fill="none" stroke="#42a2e9" stroke-width="1.5"/>
<path d="M930.4 284.3 L931.6 285.5 L932.8 284.3" fill="none" stroke="#b0b0b0" stroke-width="0.45"/>
<text x="921.8" y="301.5" font-size="4.3" fill="#555" text-anchor="middle" letter-spacing="0.28">Select/17</text>
<path d="M975.90 284.30 Q975.90 283.40 976.80 283.40 H984.80 Q985.70 283.40 985.70 284.30 V288.00 H975.90 Z" fill="#3488cf"/><path d="M976.90 284.50 h1.9 v1 h-1.9z M979.80 284.50 h1.9 v1 h-1.9z M982.80 284.50 h1.9 v1 h-1.9z M976.90 286.30 h1.9 v1 h-1.9z M979.80 286.30 h1.9 v1 h-1.9z M982.80 286.30 h1.9 v1 h-1.9z" fill="#fff" opacity="0.8"/><path d="M976.20 288.00 V293.80 H985.40 V288.00 M979.30 288.00 V293.80 M982.30 288.00 V293.80 M976.20 290.90 H985.40" fill="none" stroke="#c8c8c8" stroke-width="0.6"/><rect x="974.50" y="288.80" width="6.6" height="4.2" fill="#fff"/><path d="M974.80 290.20 h3.2 v-1.3 l2.9 2.1 l-2.9 2.1 v-1.3 h-3.2z" fill="#2f86cc"/>
<path d="M990.4 284.3 L991.6 285.5 L992.8 284.3" fill="none" stroke="#b0b0b0" stroke-width="0.45"/>
<text x="981.8" y="301.5" font-size="4.3" fill="#666" text-anchor="middle" letter-spacing="0.34">demo.dimensional_dw.custom…</text>
<rect x="1075.10" y="282.70" width="11.8" height="3.2" fill="#b9a24a"/><path d="M1076.10 283.80 h2.6 v0.9 h-2.6z M1079.70 283.80 h2.6 v0.9 h-2.6z M1083.30 283.80 h2.6 v0.9 h-2.6z" fill="#e8dfb4"/><path d="M1075.40 285.90 V294.70 H1086.60 V285.90 M1079.20 285.90 V294.70 M1082.90 285.90 V294.70 M1075.40 288.90 H1086.60 M1075.40 291.80 H1086.60" fill="none" stroke="#cdcdcd" stroke-width="0.6"/>
<path d="M1091.4 284.6 L1092.6 285.8 L1093.8 284.6" fill="none" stroke="#b0b0b0" stroke-width="0.45"/>
<text x="1082.7" y="301.5" font-size="4.3" fill="#666" text-anchor="middle" letter-spacing="0.28">customer_po_invoice_item</text>
<path d="M924.16 317.56 L925.46 318.29 L924.68 320.16 L923.26 319.76 L922.46 320.56 L922.86 321.98 L920.99 322.76 L920.26 321.46 L919.14 321.46 L918.41 322.76 L916.54 321.98 L916.94 320.56 L916.14 319.76 L914.72 320.16 L913.94 318.29 L915.24 317.56 L915.24 316.44 L913.94 315.71 L914.72 313.84 L916.14 314.24 L916.94 313.44 L916.54 312.02 L918.41 311.24 L919.14 312.54 L920.26 312.54 L920.99 311.24 L922.86 312.02 L922.46 313.44 L923.26 314.24 L924.68 313.84 L925.46 315.71 L924.16 316.44 Z M916.70 317.00 a3.00 3.00 0 1 0 6.00 0 a3.00 3.00 0 1 0 -6.00 0 Z" fill="#66b8f1" fill-rule="evenodd"/><circle cx="919.70" cy="317.00" r="3.75" fill="none" stroke="#42a2e9" stroke-width="1.5"/>
<path d="M930.4 312.5 L931.6 313.7 L932.8 312.5" fill="none" stroke="#b0b0b0" stroke-width="0.45"/>
<text x="921.8" y="329.7" font-size="4.3" fill="#555" text-anchor="middle" letter-spacing="0.28">Select/16</text>
<path d="M975.90 312.50 Q975.90 311.60 976.80 311.60 H984.80 Q985.70 311.60 985.70 312.50 V316.20 H975.90 Z" fill="#3488cf"/><path d="M976.90 312.70 h1.9 v1 h-1.9z M979.80 312.70 h1.9 v1 h-1.9z M982.80 312.70 h1.9 v1 h-1.9z M976.90 314.50 h1.9 v1 h-1.9z M979.80 314.50 h1.9 v1 h-1.9z M982.80 314.50 h1.9 v1 h-1.9z" fill="#fff" opacity="0.8"/><path d="M976.20 316.20 V322.00 H985.40 V316.20 M979.30 316.20 V322.00 M982.30 316.20 V322.00 M976.20 319.10 H985.40" fill="none" stroke="#c8c8c8" stroke-width="0.6"/><rect x="974.50" y="317.00" width="6.6" height="4.2" fill="#fff"/><path d="M974.80 318.40 h3.2 v-1.3 l2.9 2.1 l-2.9 2.1 v-1.3 h-3.2z" fill="#2f86cc"/>
<path d="M990.4 312.5 L991.6 313.7 L992.8 312.5" fill="none" stroke="#b0b0b0" stroke-width="0.45"/>
<text x="981.8" y="329.7" font-size="4.3" fill="#666" text-anchor="middle" letter-spacing="0.34">demo.dimensional_dw.custom…</text>
<rect x="1075.10" y="310.90" width="11.8" height="3.2" fill="#b9a24a"/><path d="M1076.10 312.00 h2.6 v0.9 h-2.6z M1079.70 312.00 h2.6 v0.9 h-2.6z M1083.30 312.00 h2.6 v0.9 h-2.6z" fill="#e8dfb4"/><path d="M1075.40 314.10 V322.90 H1086.60 V314.10 M1079.20 314.10 V322.90 M1082.90 314.10 V322.90 M1075.40 317.10 H1086.60 M1075.40 320.00 H1086.60" fill="none" stroke="#cdcdcd" stroke-width="0.6"/>
<path d="M1091.4 312.8 L1092.6 314.0 L1093.8 312.8" fill="none" stroke="#b0b0b0" stroke-width="0.45"/>
<text x="1082.7" y="329.7" font-size="4.3" fill="#666" text-anchor="middle" letter-spacing="0.28">customer_payment_date</text>
<path d="M924.16 345.76 L925.46 346.49 L924.68 348.36 L923.26 347.96 L922.46 348.76 L922.86 350.18 L920.99 350.96 L920.26 349.66 L919.14 349.66 L918.41 350.96 L916.54 350.18 L916.94 348.76 L916.14 347.96 L914.72 348.36 L913.94 346.49 L915.24 345.76 L915.24 344.64 L913.94 343.91 L914.72 342.04 L916.14 342.44 L916.94 341.64 L916.54 340.22 L918.41 339.44 L919.14 340.74 L920.26 340.74 L920.99 339.44 L922.86 340.22 L922.46 341.64 L923.26 342.44 L924.68 342.04 L925.46 343.91 L924.16 344.64 Z M916.70 345.20 a3.00 3.00 0 1 0 6.00 0 a3.00 3.00 0 1 0 -6.00 0 Z" fill="#66b8f1" fill-rule="evenodd"/><circle cx="919.70" cy="345.20" r="3.75" fill="none" stroke="#42a2e9" stroke-width="1.5"/>
<path d="M930.4 340.7 L931.6 341.9 L932.8 340.7" fill="none" stroke="#b0b0b0" stroke-width="0.45"/>
<text x="921.8" y="357.9" font-size="4.3" fill="#555" text-anchor="middle" letter-spacing="0.28">Select/15</text>
<path d="M975.90 340.70 Q975.90 339.80 976.80 339.80 H984.80 Q985.70 339.80 985.70 340.70 V344.40 H975.90 Z" fill="#3488cf"/><path d="M976.90 340.90 h1.9 v1 h-1.9z M979.80 340.90 h1.9 v1 h-1.9z M982.80 340.90 h1.9 v1 h-1.9z M976.90 342.70 h1.9 v1 h-1.9z M979.80 342.70 h1.9 v1 h-1.9z M982.80 342.70 h1.9 v1 h-1.9z" fill="#fff" opacity="0.8"/><path d="M976.20 344.40 V350.20 H985.40 V344.40 M979.30 344.40 V350.20 M982.30 344.40 V350.20 M976.20 347.30 H985.40" fill="none" stroke="#c8c8c8" stroke-width="0.6"/><rect x="974.50" y="345.20" width="6.6" height="4.2" fill="#fff"/><path d="M974.80 346.60 h3.2 v-1.3 l2.9 2.1 l-2.9 2.1 v-1.3 h-3.2z" fill="#2f86cc"/>
<path d="M990.4 340.7 L991.6 341.9 L992.8 340.7" fill="none" stroke="#b0b0b0" stroke-width="0.45"/>
<text x="981.6" y="357.9" font-size="4.3" fill="#666" text-anchor="middle" letter-spacing="0.34">demo.dimensional_dw.customer</text>
<rect x="1075.10" y="339.10" width="11.8" height="3.2" fill="#b9a24a"/><path d="M1076.10 340.20 h2.6 v0.9 h-2.6z M1079.70 340.20 h2.6 v0.9 h-2.6z M1083.30 340.20 h2.6 v0.9 h-2.6z" fill="#e8dfb4"/><path d="M1075.40 342.30 V351.10 H1086.60 V342.30 M1079.20 342.30 V351.10 M1082.90 342.30 V351.10 M1075.40 345.30 H1086.60 M1075.40 348.20 H1086.60" fill="none" stroke="#cdcdcd" stroke-width="0.6"/>
<path d="M1091.4 341.0 L1092.6 342.2 L1093.8 341.0" fill="none" stroke="#b0b0b0" stroke-width="0.45"/>
<text x="1082.7" y="357.9" font-size="4.3" fill="#666" text-anchor="middle" letter-spacing="0.28">customer</text>
<rect x="1153.80" y="282.70" width="11.8" height="3.2" fill="#b9a24a"/><path d="M1154.80 283.80 h2.6 v0.9 h-2.6z M1158.40 283.80 h2.6 v0.9 h-2.6z M1162.00 283.80 h2.6 v0.9 h-2.6z" fill="#e8dfb4"/><path d="M1154.10 285.90 V294.70 H1165.30 V285.90 M1157.90 285.90 V294.70 M1161.60 285.90 V294.70 M1154.10 288.90 H1165.30 M1154.10 291.80 H1165.30" fill="none" stroke="#cdcdcd" stroke-width="0.6"/><circle cx="1162.00" cy="290.80" r="3.4" fill="#fff"/><circle cx="1162.00" cy="290.80" r="2.5" fill="#fff" stroke="#2f86cc" stroke-width="0.9"/><path d="M1163.70 292.80 L1165.90 295.40" stroke="#2f86cc" stroke-width="1.1" stroke-linecap="round"/>
<path d="M1170.2 284.6 L1171.4 285.8 L1172.6 284.6" fill="none" stroke="#b0b0b0" stroke-width="0.45"/>
<text x="1161.6" y="301.5" font-size="4.3" fill="#666" text-anchor="middle" letter-spacing="0.34">paid_customer_po_gl_account…</text></g>
</g>
</svg>

<svg width="1267" height="753" viewBox="0 0 1267 753" style="pointer-events:none">
<path d="M1260 753 H1267 V746 Q1267 753 1260 753 Z" fill="#e6e6e6"/>
<path d="M64 752.5 H1259.5 Q1266.5 752.5 1266.5 745.5 V0" fill="none" stroke="#a9a9a9" stroke-width="1"/>
<path d="M0 0 H1.1 V745.5 Q1.1 752 7.6 752 H64 V753 H0 Z" fill="#202c54"/>
<path d="M1.6 0 V745" stroke="#202c54" stroke-opacity="0.28" stroke-width="1" fill="none"/>
</svg>

</body></html>
